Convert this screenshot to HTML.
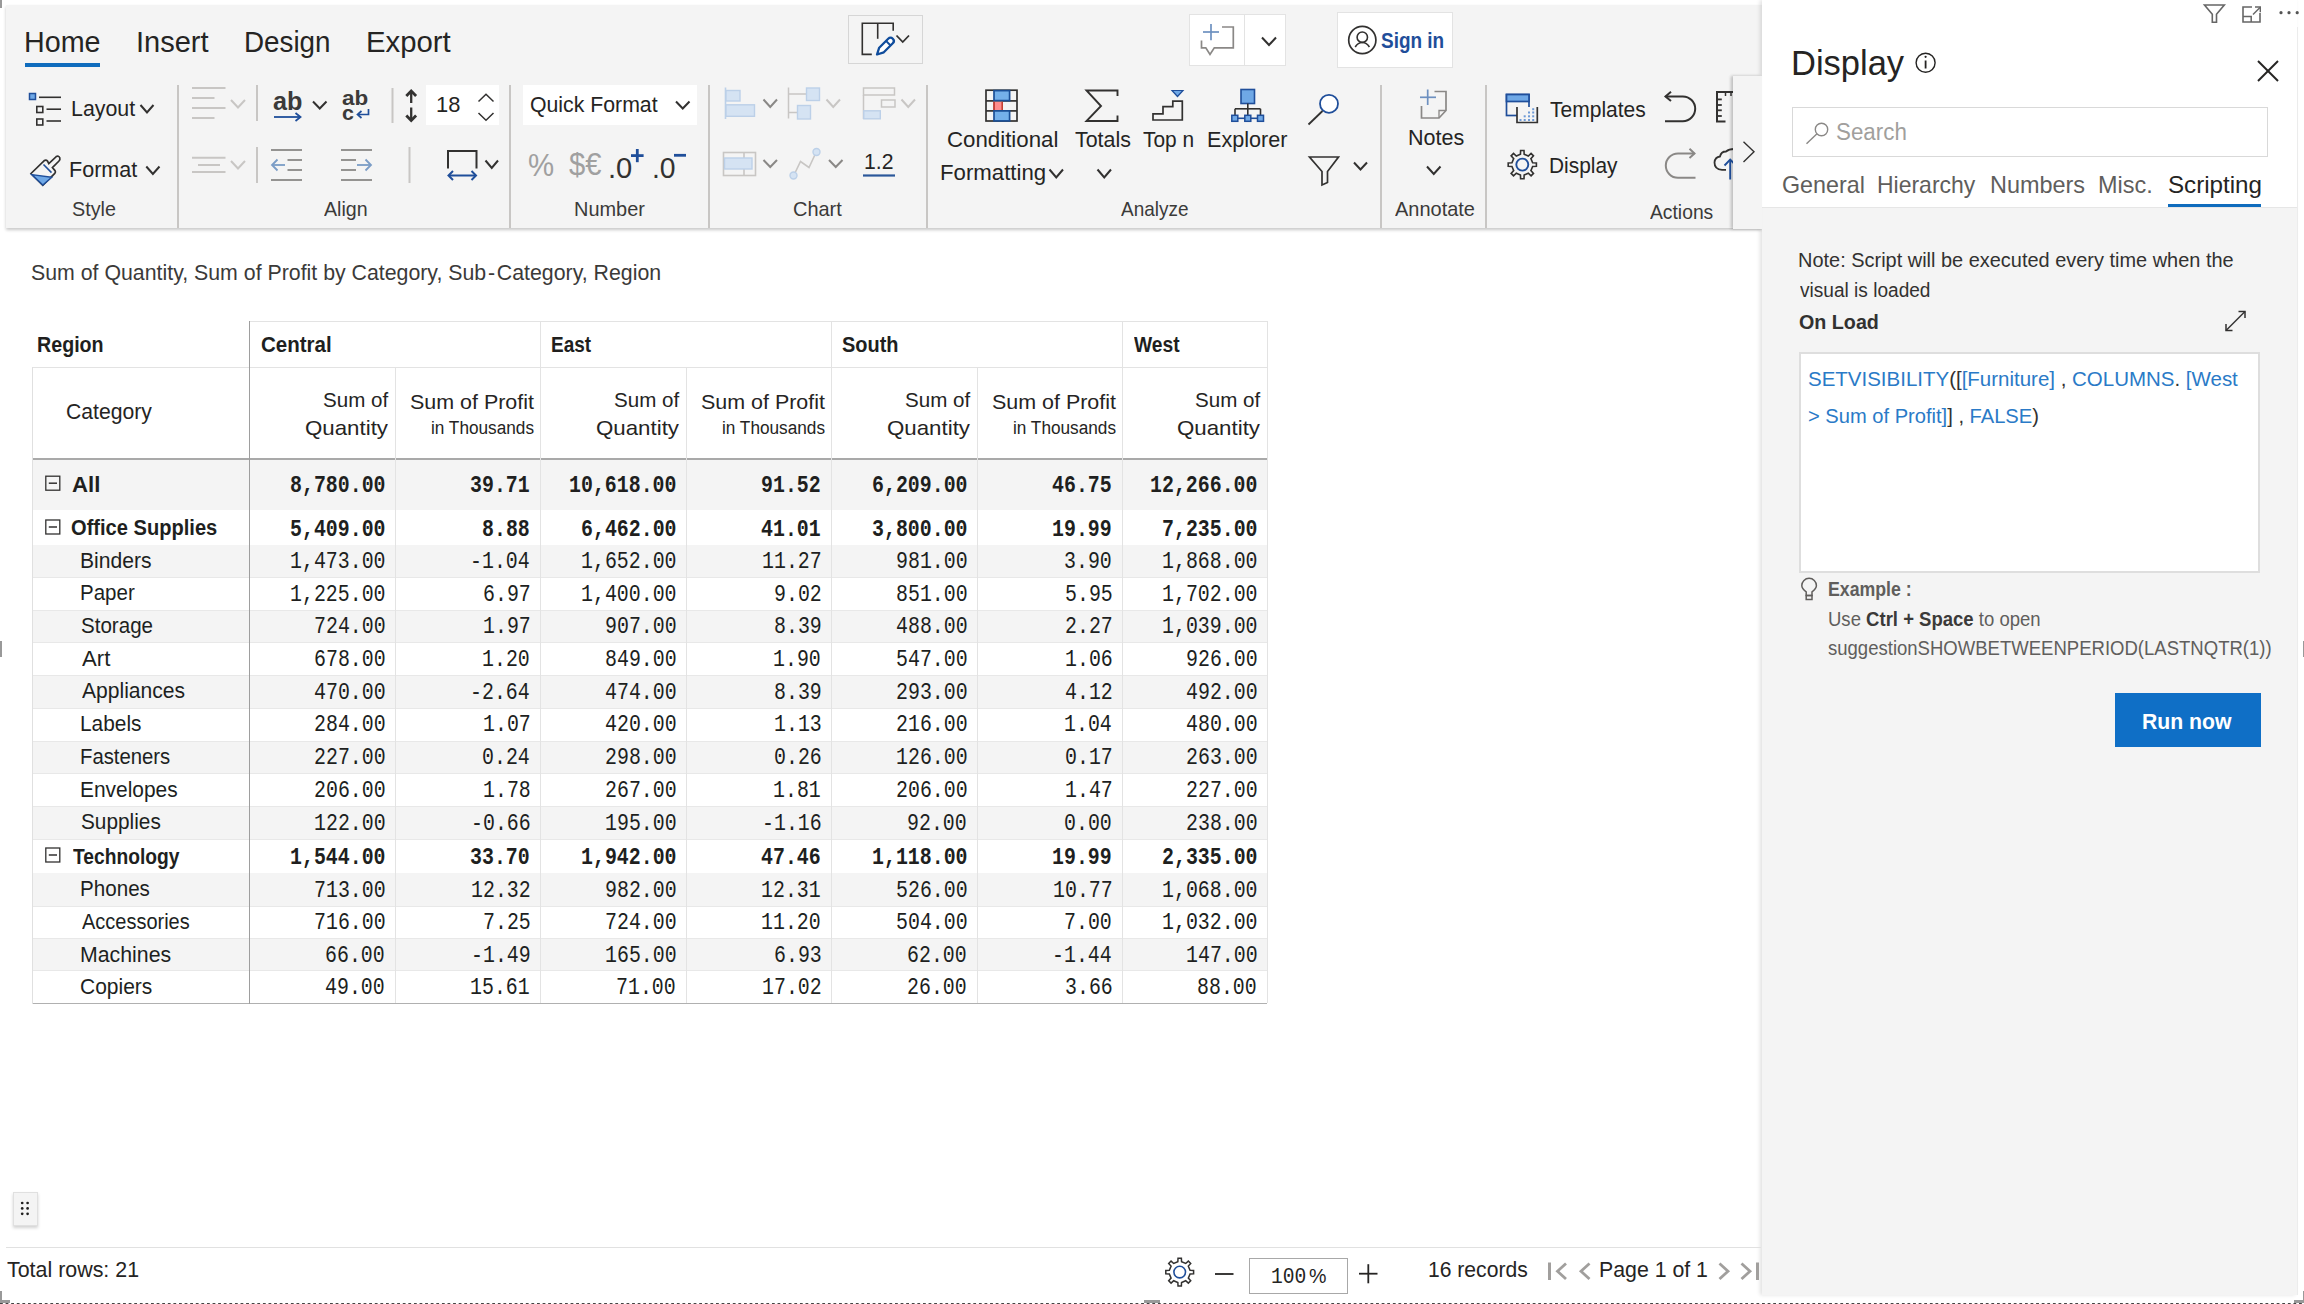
<!DOCTYPE html><html><head><meta charset="utf-8"><style>
html,body{margin:0;padding:0;width:2304px;height:1304px;overflow:hidden;background:#fff;position:relative;}
div{box-sizing:content-box}
</style></head><body>
<div style="position:absolute;left:0px;top:0px;width:2px;height:8px;background:#999;"></div><div style="position:absolute;left:0px;top:641px;width:1.5px;height:16px;background:#999;"></div><div style="position:absolute;left:2302.5px;top:641px;width:1.5px;height:16px;background:#999;"></div><div style="position:absolute;left:6px;top:5px;width:1756px;height:223px;background:#f4f4f4;box-shadow:0 2px 3px rgba(0,0,0,0.22);"></div><div style="position:absolute;left:848px;top:15px;width:75px;height:49px;background:#f4f4f4;box-sizing:border-box;border:1.5px solid #d6d6d6;"></div><div style="position:absolute;left:1189px;top:14px;width:97px;height:52px;background:#fff;box-sizing:border-box;border:1px solid #e3e3e3;"></div><div style="position:absolute;left:1244px;top:14px;width:1px;height:52px;background:#e3e3e3;"></div><div style="position:absolute;left:1337px;top:12px;width:116px;height:56px;background:#fff;box-sizing:border-box;border:1px solid #e3e3e3;"></div><div style="position:absolute;left:426px;top:85px;width:73px;height:40px;background:#fff;"></div><div style="position:absolute;left:523px;top:85px;width:174px;height:40px;background:#fff;"></div><div style="position:absolute;left:1733px;top:76px;width:29px;height:153px;background:#f4f4f4;box-shadow:-2px 0 3px rgba(0,0,0,0.12);"></div><div style="position:absolute;left:1762px;top:0px;width:535px;height:1295px;background:#fff;box-shadow:-2px 0 4px rgba(0,0,0,0.12);"></div><div style="position:absolute;left:1762px;top:207px;width:535px;height:1088px;background:#f4f4f4;border-top:1px solid #e6e6e6;box-sizing:border-box;"></div><div style="position:absolute;left:2297px;top:27px;width:1px;height:1268px;background:#ececec;"></div><div style="position:absolute;left:1792px;top:107px;width:476px;height:50px;background:#fff;box-sizing:border-box;border:1px solid #d9d9d9;"></div><div style="position:absolute;left:1799px;top:352px;width:461px;height:221px;background:#fff;box-sizing:border-box;border:2px solid #dedede;"></div><div style="position:absolute;left:2115px;top:693px;width:146px;height:54px;background:#0f6fc6;"></div><div style="position:absolute;left:32px;top:460px;width:1235px;height:50px;background:#f4f4f4;"></div><div style="position:absolute;left:32px;top:545px;width:1235px;height:32px;background:#f4f4f4;"></div><div style="position:absolute;left:32px;top:610px;width:1235px;height:32px;background:#f4f4f4;"></div><div style="position:absolute;left:32px;top:675px;width:1235px;height:33px;background:#f4f4f4;"></div><div style="position:absolute;left:32px;top:741px;width:1235px;height:32px;background:#f4f4f4;"></div><div style="position:absolute;left:32px;top:806px;width:1235px;height:33px;background:#f4f4f4;"></div><div style="position:absolute;left:32px;top:873px;width:1235px;height:33px;background:#f4f4f4;"></div><div style="position:absolute;left:32px;top:938px;width:1235px;height:32px;background:#f4f4f4;"></div><div style="position:absolute;left:32px;top:576.5px;width:1235px;height:1px;background:#e8e8e8;"></div><div style="position:absolute;left:32px;top:609.5px;width:1235px;height:1px;background:#e8e8e8;"></div><div style="position:absolute;left:32px;top:641.5px;width:1235px;height:1px;background:#e8e8e8;"></div><div style="position:absolute;left:32px;top:674.5px;width:1235px;height:1px;background:#e8e8e8;"></div><div style="position:absolute;left:32px;top:707.5px;width:1235px;height:1px;background:#e8e8e8;"></div><div style="position:absolute;left:32px;top:740.5px;width:1235px;height:1px;background:#e8e8e8;"></div><div style="position:absolute;left:32px;top:772.5px;width:1235px;height:1px;background:#e8e8e8;"></div><div style="position:absolute;left:32px;top:805.5px;width:1235px;height:1px;background:#e8e8e8;"></div><div style="position:absolute;left:32px;top:838.5px;width:1235px;height:1px;background:#e8e8e8;"></div><div style="position:absolute;left:32px;top:905.5px;width:1235px;height:1px;background:#e8e8e8;"></div><div style="position:absolute;left:32px;top:937.5px;width:1235px;height:1px;background:#e8e8e8;"></div><div style="position:absolute;left:32px;top:969.5px;width:1235px;height:1px;background:#e8e8e8;"></div><div style="position:absolute;left:32px;top:1002.5px;width:1235px;height:1px;background:#e8e8e8;"></div><div style="position:absolute;left:249px;top:321px;width:1018px;height:1px;background:#e3e3e3;"></div><div style="position:absolute;left:32px;top:367px;width:1235px;height:1px;background:#e3e3e3;"></div><div style="position:absolute;left:32px;top:458px;width:1235px;height:2px;background:#a9a9a9;"></div><div style="position:absolute;left:32px;top:1003px;width:1235px;height:1px;background:#b0b0b0;"></div><div style="position:absolute;left:32px;top:367px;width:1px;height:637px;background:#e0e0e0;"></div><div style="position:absolute;left:249px;top:321px;width:1px;height:683px;background:#9e9e9e;"></div><div style="position:absolute;left:540px;top:321px;width:1px;height:682px;background:#e3e3e3;"></div><div style="position:absolute;left:831px;top:321px;width:1px;height:682px;background:#e3e3e3;"></div><div style="position:absolute;left:1122px;top:321px;width:1px;height:682px;background:#e3e3e3;"></div><div style="position:absolute;left:1267px;top:321px;width:1px;height:682px;background:#e3e3e3;"></div><div style="position:absolute;left:395px;top:367px;width:1px;height:636px;background:#e3e3e3;"></div><div style="position:absolute;left:686px;top:367px;width:1px;height:636px;background:#e3e3e3;"></div><div style="position:absolute;left:977px;top:367px;width:1px;height:636px;background:#e3e3e3;"></div><div style="position:absolute;left:6px;top:1247px;width:1755px;height:1px;background:#e1e1e1;"></div><div style="position:absolute;left:1249px;top:1257.5px;width:99px;height:36px;background:#fff;box-sizing:border-box;border:1.5px solid #a8a8a8;"></div><div style="position:absolute;left:13px;top:1192px;width:25px;height:34px;background:#f4f4f4;box-sizing:border-box;border:1px solid #e0e0e0;box-shadow:0 2px 3px rgba(0,0,0,0.18);"></div><div style="position:absolute;left:0px;top:1303px;width:2304px;height:1px;background:transparent;background-image:linear-gradient(to right,#444 50%,transparent 50%);background-size:5.6px 1px;"></div><div style="position:absolute;left:0px;top:1291px;width:1.5px;height:12px;background:#999;"></div><div style="position:absolute;left:0px;top:1299.5px;width:9.5px;height:3.5px;background:#999;"></div><div style="position:absolute;left:2302.5px;top:1291px;width:1.5px;height:12px;background:#999;"></div><div style="position:absolute;left:2294px;top:1299.5px;width:10px;height:3.5px;background:#999;"></div><div style="position:absolute;left:1143.5px;top:1300px;width:16px;height:3px;background:#999;"></div><svg style="position:absolute;left:0;top:0" width="2304" height="1304" viewBox="0 0 2304 1304"><line x1="178" y1="85" x2="178" y2="228" stroke="#c8c6c4" stroke-width="2" /><line x1="510" y1="85" x2="510" y2="228" stroke="#c8c6c4" stroke-width="2" /><line x1="709" y1="85" x2="709" y2="228" stroke="#c8c6c4" stroke-width="2" /><line x1="927" y1="85" x2="927" y2="228" stroke="#c8c6c4" stroke-width="2" /><line x1="1381" y1="85" x2="1381" y2="228" stroke="#c8c6c4" stroke-width="2" /><line x1="1486" y1="85" x2="1486" y2="228" stroke="#c8c6c4" stroke-width="2" /><line x1="257" y1="85" x2="257" y2="121" stroke="#c8c6c4" stroke-width="2" /><line x1="257" y1="147" x2="257" y2="183" stroke="#c8c6c4" stroke-width="2" /><line x1="392.5" y1="88" x2="392.5" y2="123" stroke="#c8c6c4" stroke-width="2" /><line x1="409.5" y1="147" x2="409.5" y2="183" stroke="#c8c6c4" stroke-width="2" /><rect x="29.5" y="93.5" width="6" height="6" stroke="#1f4e9a" stroke-width="1.5" fill="#6fa8e6" /><line x1="39" y1="97.3" x2="61" y2="97.3" stroke="#323130" stroke-width="1.6" /><rect x="36.8" y="106.5" width="6" height="6" stroke="#323130" stroke-width="1.6" fill="none" /><line x1="46.5" y1="109.2" x2="61" y2="109.2" stroke="#323130" stroke-width="1.6" /><rect x="36.8" y="119" width="6" height="6" stroke="#323130" stroke-width="1.6" fill="none" /><line x1="46.5" y1="121" x2="61" y2="121" stroke="#323130" stroke-width="1.6" /><path d="M140.5 105 L147.0 112.5 L153.5 105" stroke="#323130" stroke-width="2" fill="none" stroke-linecap="butt" stroke-linejoin="miter"/><path d="M31 173.5 L44 160.8 Q46 159.3 47.5 161 L48.8 163.6 L56.2 156.6 Q58.6 155.3 59.8 157.8 Q60.3 159.8 59 161 L52.4 167.6 L55 170.6 Q56 172 54.8 173.4 L42.8 185.3 Z" stroke="#323130" stroke-width="1.7" fill="none" /><path d="M31.8 174.6 L51.8 177.2 L42.8 185 Z" stroke="#1f4e9a" stroke-width="1.4" fill="#6fa8e6" /><line x1="43.5" y1="164.5" x2="51.5" y2="172.6" stroke="#1f4e9a" stroke-width="1.6" /><path d="M146.3 166.5 L152.9 174 L159.5 166.5" stroke="#323130" stroke-width="2" fill="none" stroke-linecap="butt" stroke-linejoin="miter"/><line x1="192" y1="88" x2="225.5" y2="88" stroke="#c8c6c4" stroke-width="2" /><line x1="192" y1="98" x2="214.5" y2="98" stroke="#c8c6c4" stroke-width="2" /><line x1="192" y1="108" x2="225.5" y2="108" stroke="#c8c6c4" stroke-width="2" /><line x1="192" y1="118" x2="214.5" y2="118" stroke="#c8c6c4" stroke-width="2" /><path d="M231 100 L238.0 107.5 L245 100" stroke="#c8c6c4" stroke-width="2" fill="none" stroke-linecap="butt" stroke-linejoin="miter"/><line x1="192" y1="157.8" x2="225.5" y2="157.8" stroke="#c8c6c4" stroke-width="2" /><line x1="198" y1="165" x2="220" y2="165" stroke="#c8c6c4" stroke-width="2" /><line x1="192" y1="172" x2="225.5" y2="172" stroke="#c8c6c4" stroke-width="2" /><path d="M231 161 L238.0 168.5 L245 161" stroke="#c8c6c4" stroke-width="2" fill="none" stroke-linecap="butt" stroke-linejoin="miter"/><line x1="274" y1="117" x2="300" y2="117" stroke="#1f4e9a" stroke-width="1.8" /><path d="M295.5 113 L300.5 117 L295.5 121" stroke="#1f4e9a" stroke-width="1.8" fill="none" /><path d="M313 101.5 L319.75 108.5 L326.5 101.5" stroke="#323130" stroke-width="2" fill="none" stroke-linecap="butt" stroke-linejoin="miter"/><path d="M368.5 109 L368.5 114.5 L358 114.5" stroke="#1f4e9a" stroke-width="1.7" fill="none" /><path d="M361.5 111 L357.5 114.5 L361.5 118" stroke="#1f4e9a" stroke-width="1.7" fill="none" /><line x1="411.2" y1="92" x2="411.2" y2="103" stroke="#323130" stroke-width="2.3" /><path d="M406.3 96 L411.2 91 L416.1 96" stroke="#323130" stroke-width="2.8" fill="none" stroke-linejoin="miter"/><line x1="411.2" y1="107.5" x2="411.2" y2="119" stroke="#323130" stroke-width="2.3" /><path d="M406.3 115.5 L411.2 120.5 L416.1 115.5" stroke="#323130" stroke-width="2.8" fill="none" stroke-linejoin="miter"/><path d="M478.5 101.5 L486 94.3 L493.5 101.5" stroke="#323130" stroke-width="1.5" fill="none" /><path d="M478.5 113 L486 120.3 L493.5 113" stroke="#323130" stroke-width="1.5" fill="none" /><line x1="271" y1="150" x2="302" y2="150" stroke="#8a8886" stroke-width="1.8" /><line x1="287.5" y1="160" x2="302" y2="160" stroke="#8a8886" stroke-width="1.8" /><line x1="287.5" y1="170" x2="302" y2="170" stroke="#8a8886" stroke-width="1.8" /><line x1="271" y1="180" x2="302" y2="180" stroke="#8a8886" stroke-width="1.8" /><line x1="272" y1="165" x2="285" y2="165" stroke="#7a9cc6" stroke-width="1.8" /><path d="M277.5 159.5 L272 165 L277.5 170.5" stroke="#7a9cc6" stroke-width="1.8" fill="none" /><line x1="341" y1="150" x2="372" y2="150" stroke="#8a8886" stroke-width="1.8" /><line x1="341" y1="160" x2="356" y2="160" stroke="#8a8886" stroke-width="1.8" /><line x1="341" y1="170" x2="356" y2="170" stroke="#8a8886" stroke-width="1.8" /><line x1="341" y1="180" x2="372" y2="180" stroke="#8a8886" stroke-width="1.8" /><line x1="357" y1="165" x2="371" y2="165" stroke="#7a9cc6" stroke-width="1.8" /><path d="M365.5 159.5 L371 165 L365.5 170.5" stroke="#7a9cc6" stroke-width="1.8" fill="none" /><path d="M448 168.5 L448 151 L476.5 151 L476.5 168.5" stroke="#323130" stroke-width="2" fill="none" /><line x1="449" y1="175.5" x2="476" y2="175.5" stroke="#1f4e9a" stroke-width="2" /><path d="M453 171 L448.5 175.5 L453 180" stroke="#1f4e9a" stroke-width="2" fill="none" /><path d="M471.5 171 L476 175.5 L471.5 180" stroke="#1f4e9a" stroke-width="2" fill="none" /><path d="M485.5 160.5 L491.75 168 L498 160.5" stroke="#323130" stroke-width="2" fill="none" stroke-linecap="butt" stroke-linejoin="miter"/><path d="M676 101.5 L682.75 108.5 L689.5 101.5" stroke="#323130" stroke-width="2" fill="none" stroke-linecap="butt" stroke-linejoin="miter"/><line x1="637.3" y1="149" x2="637.3" y2="162.2" stroke="#1f4e9a" stroke-width="2.8" /><line x1="631" y1="155.6" x2="643.6" y2="155.6" stroke="#1f4e9a" stroke-width="2.8" /><line x1="674" y1="155.3" x2="686" y2="155.3" stroke="#1f4e9a" stroke-width="2.8" /><line x1="725.5" y1="87.5" x2="725.5" y2="119" stroke="#bcd0e8" stroke-width="1.6" /><rect x="726" y="90.5" width="14" height="10.5" stroke="#bcd0e8" stroke-width="1.4" fill="#d5e3f3" /><rect x="726" y="104.8" width="28.5" height="11.5" stroke="#bcd0e8" stroke-width="1.4" fill="#d5e3f3" /><path d="M763.5 99.5 L770.25 107 L777 99.5" stroke="#8a8886" stroke-width="2" fill="none" stroke-linecap="butt" stroke-linejoin="miter"/><line x1="788.5" y1="87.5" x2="788.5" y2="118.5" stroke="#c8c6c4" stroke-width="1.5" /><line x1="788.5" y1="94" x2="806" y2="94" stroke="#c8c6c4" stroke-width="1.5" /><line x1="788.5" y1="112.5" x2="797" y2="112.5" stroke="#c8c6c4" stroke-width="1.5" /><rect x="806.5" y="88" width="13" height="12.5" stroke="#bcd0e8" stroke-width="1.4" fill="#d5e3f3" /><rect x="797.5" y="105.5" width="13" height="13.5" stroke="#bcd0e8" stroke-width="1.4" fill="#d5e3f3" /><path d="M826.5 99.5 L833.25 107 L840 99.5" stroke="#c8c6c4" stroke-width="2" fill="none" stroke-linecap="butt" stroke-linejoin="miter"/><rect x="863.5" y="88" width="31" height="7" stroke="#c8c6c4" stroke-width="1.5" fill="none" /><rect x="881.5" y="100" width="13.5" height="7" stroke="#c8c6c4" stroke-width="1.5" fill="none" /><line x1="863.5" y1="95" x2="863.5" y2="119" stroke="#c8c6c4" stroke-width="1.5" /><rect x="863.8" y="110.8" width="16.5" height="8" stroke="#bcd0e8" stroke-width="1.4" fill="#d5e3f3" /><path d="M901.5 99.5 L908.25 107 L915 99.5" stroke="#c8c6c4" stroke-width="2" fill="none" stroke-linecap="butt" stroke-linejoin="miter"/><rect x="723.5" y="152.5" width="32" height="23" stroke="#c8c6c4" stroke-width="1.6" fill="none" /><line x1="744" y1="152.5" x2="744" y2="175.5" stroke="#c8c6c4" stroke-width="1.6" /><rect x="724.5" y="158" width="27.5" height="11" stroke="#bcd0e8" stroke-width="1.4" fill="#d5e3f3" /><path d="M763.5 160 L770.25 167 L777 160" stroke="#8a8886" stroke-width="2" fill="none" stroke-linecap="butt" stroke-linejoin="miter"/><path d="M794 175 L800.5 161.5 L809 167.5 L816 152.5" stroke="#c8c6c4" stroke-width="1.6" fill="none" /><circle cx="793.5" cy="175.5" r="3.5" stroke="#bcd0e8" stroke-width="1.4" fill="#d5e3f3"/><circle cx="816.5" cy="152" r="3.5" stroke="#bcd0e8" stroke-width="1.4" fill="#d5e3f3"/><path d="M829 160 L835.75 167 L842.5 160" stroke="#8a8886" stroke-width="2" fill="none" stroke-linecap="butt" stroke-linejoin="miter"/><line x1="863" y1="175.5" x2="895" y2="175.5" stroke="#2b579a" stroke-width="2.2" /><rect x="986" y="90.2" width="31" height="30.8" stroke="#323130" stroke-width="1.7" fill="none" /><line x1="986" y1="100.9" x2="1017" y2="100.9" stroke="#323130" stroke-width="1.7" /><line x1="986" y1="110.9" x2="1017" y2="110.9" stroke="#323130" stroke-width="1.7" /><rect x="994" y="90.6" width="15.6" height="10" fill="#74b0ea" stroke="#1a4f97" stroke-width="1.7"/><rect x="994" y="110.9" width="15.6" height="10" fill="#74b0ea" stroke="#1a4f97" stroke-width="1.7"/><rect x="993.5" y="101.8" width="9" height="8.2" fill="#ff8c8c"/><line x1="994" y1="101.8" x2="994" y2="110" stroke="#b0281e" stroke-width="1.5" /><line x1="1002.2" y1="101.8" x2="1002.2" y2="110" stroke="#c0392b" stroke-width="1.5" /><path d="M1049.5 169.5 L1056.25 177.5 L1063 169.5" stroke="#323130" stroke-width="2" fill="none" stroke-linecap="butt" stroke-linejoin="miter"/><path d="M1117.5 96 L1117.5 90.5 L1086.5 90.5 L1101 106 L1086.5 121 L1117.5 121 L1117.5 115.5" stroke="#323130" stroke-width="1.9" fill="none" /><path d="M1097.5 169.5 L1104.25 177.5 L1111 169.5" stroke="#323130" stroke-width="2" fill="none" stroke-linecap="butt" stroke-linejoin="miter"/><path d="M1153 120 L1153 113.8 L1163 113.8 L1163 106.6 L1172.8 106.6 L1172.8 101.2 L1182.3 101.2 L1182.3 120 Z" stroke="#323130" stroke-width="1.7" fill="none" /><path d="M1172 90.5 L1183 90.5 L1177.5 96.5 Z" stroke="#1f4e9a" stroke-width="1.2" fill="#6fa8e6" /><rect x="1241" y="89.5" width="13.5" height="14" stroke="#1f4e9a" stroke-width="1.6" fill="#6fa8e6" /><line x1="1247.8" y1="103.5" x2="1247.8" y2="118" stroke="#323130" stroke-width="1.6" /><line x1="1235" y1="108.8" x2="1260.5" y2="108.8" stroke="#323130" stroke-width="1.6" /><line x1="1235" y1="108.8" x2="1235" y2="115" stroke="#323130" stroke-width="1.6" /><line x1="1260.5" y1="108.8" x2="1260.5" y2="115" stroke="#323130" stroke-width="1.6" /><line x1="1235" y1="118.3" x2="1260.5" y2="118.3" stroke="#1f4e9a" stroke-width="1.6" /><rect x="1231.8" y="115.3" width="6" height="6" stroke="#1f4e9a" stroke-width="1.5" fill="#6fa8e6" /><rect x="1244.8" y="115.3" width="6" height="6" stroke="#1f4e9a" stroke-width="1.5" fill="#6fa8e6" /><rect x="1257.5" y="115.3" width="6" height="6" stroke="#1f4e9a" stroke-width="1.5" fill="#6fa8e6" /><circle cx="1329" cy="103.8" r="9" stroke="#1f4e9a" stroke-width="1.8" fill="#fff"/><line x1="1308.5" y1="124.5" x2="1322.5" y2="111" stroke="#323130" stroke-width="1.8" /><path d="M1309.5 157 L1338.5 157 L1327.5 171.5 L1327.5 182.5 L1322 185 L1322 171.5 Z" stroke="#323130" stroke-width="1.7" fill="none" /><path d="M1354 162.5 L1360.5 169.5 L1367 162.5" stroke="#323130" stroke-width="2" fill="none" stroke-linecap="butt" stroke-linejoin="miter"/><line x1="1427.7" y1="89.5" x2="1427.7" y2="105" stroke="#6d90c0" stroke-width="1.7" /><line x1="1420" y1="97.3" x2="1436" y2="97.3" stroke="#6d90c0" stroke-width="1.7" /><path d="M1434.5 91.5 L1446 91.5 L1446 110.5 L1439 118 L1421.5 118 L1421.5 106" stroke="#8a8886" stroke-width="1.7" fill="none" /><path d="M1446 110.5 L1439 110.5 L1439 118" stroke="#8a8886" stroke-width="1.3" fill="none" /><path d="M1427 166.5 L1433.75 174 L1440.5 166.5" stroke="#323130" stroke-width="2" fill="none" stroke-linecap="butt" stroke-linejoin="miter"/><rect x="1506.5" y="94.5" width="22.5" height="21" stroke="#1f4e9a" stroke-width="1.7" fill="none" /><rect x="1506.5" y="94.5" width="22.5" height="7" fill="#6fa8e6" stroke="#1f4e9a" stroke-width="1.7"/><rect x="1517" y="107" width="20.5" height="15.5" fill="#f4f4f4"/><path d="M1517 107 L1517 122.5 L1537.3 122.5 L1537.3 107" stroke="#323130" stroke-width="1.7" fill="none" /><rect x="1532.2" y="108.2" width="2" height="2" fill="#6d9ad6"/><rect x="1528" y="111.5" width="2" height="2" fill="#6d9ad6"/><rect x="1532.2" y="111.5" width="2" height="2" fill="#6d9ad6"/><rect x="1523.7" y="115.3" width="2" height="2" fill="#6d9ad6"/><rect x="1528" y="115.3" width="2" height="2" fill="#6d9ad6"/><rect x="1532.2" y="115.3" width="2" height="2" fill="#6d9ad6"/><rect x="1519.5" y="119" width="2" height="2" fill="#6d9ad6"/><rect x="1523.7" y="119" width="2" height="2" fill="#6d9ad6"/><rect x="1528" y="119" width="2" height="2" fill="#6d9ad6"/><rect x="1532.2" y="119" width="2" height="2" fill="#6d9ad6"/><path d="M1532.64 162.75 L1536.40 162.90 L1536.40 166.30 L1532.64 166.45 L1530.91 170.60 L1533.47 173.36 L1531.06 175.77 L1528.30 173.21 L1524.15 174.94 L1524.00 178.70 L1520.60 178.70 L1520.45 174.94 L1516.30 173.21 L1513.54 175.77 L1511.13 173.36 L1513.69 170.60 L1511.96 166.45 L1508.20 166.30 L1508.20 162.90 L1511.96 162.75 L1513.69 158.60 L1511.13 155.84 L1513.54 153.43 L1516.30 155.99 L1520.45 154.26 L1520.60 150.50 L1524.00 150.50 L1524.15 154.26 L1528.30 155.99 L1531.06 153.43 L1533.47 155.84 L1530.91 158.60 Z" stroke="#323130" stroke-width="1.6" fill="none" /><circle cx="1522.3" cy="164.6" r="6" stroke="#1f4e9a" stroke-width="1.9" fill="none"/><path d="M1665.5 96.4 L1682.8 96.4 A12.4 12.4 0 0 1 1682.8 121.2 L1665 121.2" stroke="#323130" stroke-width="2" fill="none" /><path d="M1671 91.8 L1665.5 96.4 L1671 101" stroke="#323130" stroke-width="2" fill="none" /><path d="M1694.5 153.4 L1678 153.4 A12.2 12.2 0 0 0 1678 177.8 L1695.5 177.8" stroke="#8a8886" stroke-width="2" fill="none" /><path d="M1689.5 148.8 L1694.5 153.4 L1689.5 158" stroke="#8a8886" stroke-width="2" fill="none" /><path d="M1735 92 L1717 92 L1717 121.5 L1725.5 121.5" stroke="#323130" stroke-width="2" fill="none" /><line x1="1717" y1="99.4" x2="1721.8" y2="99.4" stroke="#323130" stroke-width="1.8" /><line x1="1717" y1="105" x2="1721.8" y2="105" stroke="#323130" stroke-width="1.8" /><line x1="1717" y1="110.3" x2="1721.8" y2="110.3" stroke="#323130" stroke-width="1.8" /><line x1="1717" y1="116" x2="1721.8" y2="116" stroke="#323130" stroke-width="1.8" /><line x1="1725.5" y1="92" x2="1725.5" y2="96" stroke="#323130" stroke-width="1.5" /><line x1="1731" y1="92" x2="1731" y2="96" stroke="#323130" stroke-width="1.5" /><path d="M1726 169.8 L1722 169.8 Q1714.5 169.5 1714.5 162.5 Q1715 157 1720 156.5 Q1721 151.5 1726 151.5 Q1729 149 1734 149" stroke="#323130" stroke-width="1.8" fill="none" /><line x1="1730.2" y1="179.5" x2="1730.2" y2="160" stroke="#1f4e9a" stroke-width="1.9" /><path d="M1724.5 165.5 L1730.2 159.6 L1736 165.5" stroke="#1f4e9a" stroke-width="1.9" fill="none" /><path d="M871.8 54.4 L862.3 54.4 L862.3 23.3 L893.2 23.3 L893.2 30.7" stroke="#323130" stroke-width="1.6" fill="none" /><line x1="877.7" y1="23.3" x2="877.7" y2="38.8" stroke="#323130" stroke-width="1.6" /><path d="M877 54.5 L879.2 47.7 L888.2 38.7 Q890.5 36.4 892.8 38.7 Q895.1 41 892.8 43.3 L883.8 52.3 Z" stroke="#0f4c9c" stroke-width="2.3" fill="#fff" stroke-linejoin="round"/><line x1="886" y1="40.9" x2="890.6" y2="45.5" stroke="#0f4c9c" stroke-width="2.0" /><path d="M896.5 35.5 L902.75 42 L909 35.5" stroke="#323130" stroke-width="1.8" fill="none" stroke-linecap="butt" stroke-linejoin="miter"/><line x1="1211" y1="24" x2="1211" y2="40.2" stroke="#6d90c0" stroke-width="1.7" /><line x1="1203" y1="32" x2="1219" y2="32" stroke="#6d90c0" stroke-width="1.7" /><path d="M1222 27 L1233.3 27 L1233.3 47.8 L1214.3 47.8 L1210 54.5 L1205.8 47.8 L1201.5 47.8 L1201.5 40.5" stroke="#8a8886" stroke-width="1.7" fill="none" /><path d="M1262 37.5 L1269.0 45 L1276 37.5" stroke="#323130" stroke-width="2" fill="none" stroke-linecap="butt" stroke-linejoin="miter"/><circle cx="1362.3" cy="40" r="13.6" stroke="#323130" stroke-width="1.7" fill="none"/><circle cx="1362.3" cy="37.2" r="5.2" stroke="#323130" stroke-width="1.6" fill="none"/><path d="M1355.2 47 Q1358 42.5 1362.3 42.5 Q1366.6 42.5 1369.4 47" stroke="#323130" stroke-width="1.6" fill="none" /><path d="M1743.5 141.8 L1754 151.8 L1743.5 162" stroke="#323130" stroke-width="1.4" fill="none" /><path d="M2204.5 5 L2224.3 5 L2216.5 14.2 L2216.5 22.3 L2212.3 22.3 L2212.3 14.2 Z" stroke="#666" stroke-width="1.6" fill="none" /><path d="M2252 7 L2243 7 L2243 22 L2260 22 L2260 13" stroke="#666" stroke-width="1.6" fill="none" /><path d="M2243 16.5 L2251.2 16.5 L2251.2 22" stroke="#666" stroke-width="1.5" fill="none" /><line x1="2253" y1="14.5" x2="2260" y2="7.5" stroke="#666" stroke-width="1.4" /><path d="M2255 7 L2260.3 7 L2260.3 12.3" stroke="#666" stroke-width="1.4" fill="none" /><circle cx="2281" cy="12.7" r="1.6" fill="#555"/><circle cx="2289" cy="12.7" r="1.6" fill="#555"/><circle cx="2297.2" cy="12.7" r="1.6" fill="#555"/><line x1="2258" y1="61" x2="2278" y2="81" stroke="#252423" stroke-width="1.9" /><line x1="2278" y1="61" x2="2258" y2="81" stroke="#252423" stroke-width="1.9" /><circle cx="1925.6" cy="62.8" r="9.5" stroke="#252423" stroke-width="1.4" fill="none"/><line x1="1925.6" y1="60.5" x2="1925.6" y2="68.5" stroke="#252423" stroke-width="1.8" /><circle cx="1925.6" cy="56.8" r="1.1" fill="#252423"/><circle cx="1821.5" cy="129.5" r="6.2" stroke="#8a8886" stroke-width="1.4" fill="none"/><line x1="1806.5" y1="143.8" x2="1817" y2="133.8" stroke="#8a8886" stroke-width="1.4" /><line x1="2226" y1="330.5" x2="2245" y2="311.5" stroke="#323130" stroke-width="1.5" /><path d="M2238.5 311.5 L2245 311.5 L2245 318" stroke="#323130" stroke-width="1.5" fill="none" /><path d="M2226 324 L2226 330.5 L2232.5 330.5" stroke="#323130" stroke-width="1.5" fill="none" /><path d="M1806.2 595.5 L1806.2 591.8 Q1801.8 588.8 1801.8 585.6 A7.3 7.3 0 1 1 1816.4 585.6 Q1816.4 588.8 1812 591.8 L1812 595.5 Z" stroke="#605e5c" stroke-width="1.5" fill="none" /><rect x="1806.2" y="595.5" width="5.8" height="4" stroke="#605e5c" stroke-width="1.5" fill="none" /><rect x="45.8" y="476.2" width="14" height="14" stroke="#323130" stroke-width="1.3" fill="none" /><line x1="48.8" y1="483.2" x2="57" y2="483.2" stroke="#323130" stroke-width="1.5" /><rect x="45.8" y="520" width="14" height="14" stroke="#323130" stroke-width="1.3" fill="none" /><line x1="48.8" y1="527" x2="57" y2="527" stroke="#323130" stroke-width="1.5" /><rect x="45.8" y="848" width="14" height="14" stroke="#323130" stroke-width="1.3" fill="none" /><line x1="48.8" y1="855" x2="57" y2="855" stroke="#323130" stroke-width="1.5" /><path d="M1190.04 1270.25 L1193.60 1270.42 L1193.60 1273.78 L1190.04 1273.95 L1188.31 1278.10 L1190.71 1280.74 L1188.34 1283.11 L1185.70 1280.71 L1181.55 1282.44 L1181.38 1286.00 L1178.02 1286.00 L1177.85 1282.44 L1173.70 1280.71 L1171.06 1283.11 L1168.69 1280.74 L1171.09 1278.10 L1169.36 1273.95 L1165.80 1273.78 L1165.80 1270.42 L1169.36 1270.25 L1171.09 1266.10 L1168.69 1263.46 L1171.06 1261.09 L1173.70 1263.49 L1177.85 1261.76 L1178.02 1258.20 L1181.38 1258.20 L1181.55 1261.76 L1185.70 1263.49 L1188.34 1261.09 L1190.71 1263.46 L1188.31 1266.10 Z" stroke="#323130" stroke-width="1.5" fill="none" /><circle cx="1179.7" cy="1272.1" r="5.8" stroke="#1f4e9a" stroke-width="1.6" fill="none"/><line x1="1215" y1="1274" x2="1233.5" y2="1274" stroke="#252423" stroke-width="1.8" /><line x1="1359" y1="1273.7" x2="1377.5" y2="1273.7" stroke="#252423" stroke-width="1.8" /><line x1="1368.3" y1="1264.2" x2="1368.3" y2="1283.3" stroke="#252423" stroke-width="1.8" /><line x1="1549.5" y1="1262.5" x2="1549.5" y2="1280" stroke="#a19f9d" stroke-width="3" /><path d="M1566 1263.5 L1557.5 1271.2 L1566 1279" stroke="#a19f9d" stroke-width="2.8" fill="none" /><path d="M1589.5 1263.5 L1581 1271.2 L1589.5 1279" stroke="#a19f9d" stroke-width="2.8" fill="none" /><path d="M1719.5 1263.5 L1728 1271.2 L1719.5 1279" stroke="#a19f9d" stroke-width="2.8" fill="none" /><path d="M1741.5 1263.5 L1750 1271.2 L1741.5 1279" stroke="#a19f9d" stroke-width="2.8" fill="none" /><line x1="1757.5" y1="1262.5" x2="1757.5" y2="1280" stroke="#a19f9d" stroke-width="3" /><circle cx="22.2" cy="1203" r="1.35" fill="#201f1e"/><circle cx="27.6" cy="1203" r="1.35" fill="#201f1e"/><circle cx="22.2" cy="1208.4" r="1.35" fill="#201f1e"/><circle cx="27.6" cy="1208.4" r="1.35" fill="#201f1e"/><circle cx="22.2" cy="1213.8" r="1.35" fill="#201f1e"/><circle cx="27.6" cy="1213.8" r="1.35" fill="#201f1e"/></svg><div style="position:absolute;left:1733px;top:76px;width:29px;height:153px;background:#f4f4f4;box-shadow:-2px 0 3px rgba(0,0,0,0.12);"></div><svg style="position:absolute;left:1733px;top:76px" width="29" height="153" viewBox="1733 76 29 153"><path d="M1743.5 141.8 L1754 151.8 L1743.5 162" stroke="#323130" stroke-width="1.4" fill="none"/></svg><div style="position:absolute;left:24.00px;top:27.40px;font-family:'Liberation Sans', sans-serif;font-size:30px;font-weight:400;line-height:30px;color:#252423;white-space:nowrap;transform:scale(0.9567,1.0000);transform-origin:0 25.40px;">Home</div><div style="position:absolute;left:135.69px;top:27.40px;font-family:'Liberation Sans', sans-serif;font-size:30px;font-weight:400;line-height:30px;color:#252423;white-space:nowrap;transform:scale(0.9674,1.0000);transform-origin:0 25.40px;">Insert</div><div style="position:absolute;left:243.98px;top:27.40px;font-family:'Liberation Sans', sans-serif;font-size:30px;font-weight:400;line-height:30px;color:#252423;white-space:nowrap;transform:scale(0.9264,1.0000);transform-origin:0 25.40px;">Design</div><div style="position:absolute;left:365.66px;top:27.40px;font-family:'Liberation Sans', sans-serif;font-size:30px;font-weight:400;line-height:30px;color:#252423;white-space:nowrap;transform:scale(0.9762,1.0000);transform-origin:0 25.40px;">Export</div><div style="position:absolute;left:25px;top:63px;width:75px;height:4px;background:#0f6cbd;"></div><div style="position:absolute;left:70.99px;top:97.97px;font-family:'Liberation Sans', sans-serif;font-size:22px;font-weight:400;line-height:22px;color:#252423;white-space:nowrap;transform:scale(0.9715,1.0000);transform-origin:0 18.63px;">Layout</div><div style="position:absolute;left:69.48px;top:159.37px;font-family:'Liberation Sans', sans-serif;font-size:22px;font-weight:400;line-height:22px;color:#252423;white-space:nowrap;transform:scale(0.9799,1.0000);transform-origin:0 18.63px;">Format</div><div style="position:absolute;left:72.31px;top:198.02px;font-family:'Liberation Sans', sans-serif;font-size:21px;font-weight:400;line-height:21px;color:#3b3a39;white-space:nowrap;transform:scale(0.9412,1.0000);transform-origin:0 17.78px;">Style</div><div style="position:absolute;left:323.60px;top:197.62px;font-family:'Liberation Sans', sans-serif;font-size:21px;font-weight:400;line-height:21px;color:#3b3a39;white-space:nowrap;transform:scale(0.9347,1.0000);transform-origin:0 17.78px;">Align</div><div style="position:absolute;left:436.36px;top:94.17px;font-family:'Liberation Sans', sans-serif;font-size:22px;font-weight:400;line-height:22px;color:#252423;white-space:nowrap;transform:scale(0.9959,1.0000);transform-origin:0 18.63px;">18</div><div style="position:absolute;left:529.94px;top:94.17px;font-family:'Liberation Sans', sans-serif;font-size:22px;font-weight:400;line-height:22px;color:#252423;white-space:nowrap;transform:scale(0.9664,1.0000);transform-origin:0 18.63px;">Quick Format</div><div style="position:absolute;left:574.10px;top:197.92px;font-family:'Liberation Sans', sans-serif;font-size:21px;font-weight:400;line-height:21px;color:#3b3a39;white-space:nowrap;transform:scale(0.9496,1.0000);transform-origin:0 17.78px;">Number</div><div style="position:absolute;left:793.20px;top:197.72px;font-family:'Liberation Sans', sans-serif;font-size:21px;font-weight:400;line-height:21px;color:#3b3a39;white-space:nowrap;transform:scale(0.9504,1.0000);transform-origin:0 17.78px;">Chart</div><div style="position:absolute;left:863.91px;top:150.57px;font-family:'Liberation Sans', sans-serif;font-size:22px;font-weight:400;line-height:22px;color:#252423;white-space:nowrap;transform:scale(0.9630,1.0000);transform-origin:0 18.63px;">1.2</div><div style="position:absolute;left:947.09px;top:129.70px;font-family:'Liberation Sans', sans-serif;font-size:21.5px;font-weight:400;line-height:21.5px;color:#252423;white-space:nowrap;transform:scale(1.0350,1.0000);transform-origin:0 18.20px;">Conditional</div><div style="position:absolute;left:940.12px;top:162.50px;font-family:'Liberation Sans', sans-serif;font-size:21.5px;font-weight:400;line-height:21.5px;color:#252423;white-space:nowrap;transform:scale(1.0326,1.0000);transform-origin:0 18.20px;">Formatting</div><div style="position:absolute;left:1074.87px;top:129.70px;font-family:'Liberation Sans', sans-serif;font-size:21.5px;font-weight:400;line-height:21.5px;color:#252423;white-space:nowrap;transform:scale(0.9958,1.0000);transform-origin:0 18.20px;">Totals</div><div style="position:absolute;left:1142.68px;top:129.80px;font-family:'Liberation Sans', sans-serif;font-size:21.5px;font-weight:400;line-height:21.5px;color:#252423;white-space:nowrap;transform:scale(0.9716,1.0000);transform-origin:0 18.20px;">Top n</div><div style="position:absolute;left:1207.47px;top:129.80px;font-family:'Liberation Sans', sans-serif;font-size:21.5px;font-weight:400;line-height:21.5px;color:#252423;white-space:nowrap;transform:scale(1.0047,1.0000);transform-origin:0 18.20px;">Explorer</div><div style="position:absolute;left:1121.40px;top:197.72px;font-family:'Liberation Sans', sans-serif;font-size:21px;font-weight:400;line-height:21px;color:#3b3a39;white-space:nowrap;transform:scale(0.9035,1.0000);transform-origin:0 17.78px;">Analyze</div><div style="position:absolute;left:1407.58px;top:126.97px;font-family:'Liberation Sans', sans-serif;font-size:22px;font-weight:400;line-height:22px;color:#252423;white-space:nowrap;transform:scale(0.9783,1.0000);transform-origin:0 18.63px;">Notes</div><div style="position:absolute;left:1394.70px;top:197.72px;font-family:'Liberation Sans', sans-serif;font-size:21px;font-weight:400;line-height:21px;color:#3b3a39;white-space:nowrap;transform:scale(0.9512,1.0000);transform-origin:0 17.78px;">Annotate</div><div style="position:absolute;left:1549.88px;top:99.17px;font-family:'Liberation Sans', sans-serif;font-size:22px;font-weight:400;line-height:22px;color:#252423;white-space:nowrap;transform:scale(0.9555,1.0000);transform-origin:0 18.63px;">Templates</div><div style="position:absolute;left:1548.63px;top:155.37px;font-family:'Liberation Sans', sans-serif;font-size:22px;font-weight:400;line-height:22px;color:#252423;white-space:nowrap;transform:scale(0.9489,1.0000);transform-origin:0 18.63px;">Display</div><div style="position:absolute;left:1650.20px;top:201.22px;font-family:'Liberation Sans', sans-serif;font-size:21px;font-weight:400;line-height:21px;color:#3b3a39;white-space:nowrap;transform:scale(0.9186,1.0000);transform-origin:0 17.78px;">Actions</div><div style="position:absolute;left:1380.53px;top:30.07px;font-family:'Liberation Sans', sans-serif;font-size:22px;font-weight:700;line-height:22px;color:#1f4e9a;white-space:nowrap;transform:scale(0.8614,1.0000);transform-origin:0 18.63px;">Sign in</div><div style="position:absolute;left:273.24px;top:88.73px;font-family:'Liberation Sans', sans-serif;font-size:25px;font-weight:700;line-height:25px;color:#3b3a39;white-space:nowrap;transform:scale(1.0082,1.0000);transform-origin:0 21.17px;">ab</div><div style="position:absolute;left:341.93px;top:88.27px;font-family:'Liberation Sans', sans-serif;font-size:20px;font-weight:700;line-height:20px;color:#3b3a39;white-space:nowrap;transform:scale(1.1233,1.0000);transform-origin:0 16.93px;">ab</div><div style="position:absolute;left:341.74px;top:103.47px;font-family:'Liberation Sans', sans-serif;font-size:20px;font-weight:700;line-height:20px;color:#3b3a39;white-space:nowrap;transform:scale(1.0722,1.0000);transform-origin:0 16.93px;">c</div><div style="position:absolute;left:527.57px;top:150.35px;font-family:'Liberation Sans', sans-serif;font-size:31px;font-weight:400;line-height:31px;color:#a0a0a0;white-space:nowrap;transform:scale(0.9481,1.0000);transform-origin:0 26.25px;">%</div><div style="position:absolute;left:568.51px;top:149.25px;font-family:'Liberation Sans', sans-serif;font-size:31px;font-weight:400;line-height:31px;color:#a0a0a0;white-space:nowrap;transform:scale(0.9425,1.0000);transform-origin:0 26.25px;">$€</div><div style="position:absolute;left:608.18px;top:153.75px;font-family:'Liberation Sans', sans-serif;font-size:29px;font-weight:400;line-height:29px;color:#323130;white-space:nowrap;transform:scale(1.0053,1.0000);transform-origin:0 24.55px;">.0</div><div style="position:absolute;left:651.95px;top:153.75px;font-family:'Liberation Sans', sans-serif;font-size:29px;font-weight:400;line-height:29px;color:#323130;white-space:nowrap;transform:scale(0.9762,1.0000);transform-origin:0 24.55px;">.0</div><div style="position:absolute;left:1790.94px;top:44.25px;font-family:'Liberation Sans', sans-serif;font-size:37.5px;font-weight:400;line-height:37.5px;color:#252423;white-space:nowrap;transform:scale(0.9200,0.9500);transform-origin:0 31.75px;">Display</div><div style="position:absolute;left:1836.39px;top:120.93px;font-family:'Liberation Sans', sans-serif;font-size:23px;font-weight:400;line-height:23px;color:#a19f9d;white-space:nowrap;transform:scale(0.9720,1.0000);transform-origin:0 19.47px;">Search</div><div style="position:absolute;left:1782.24px;top:172.98px;font-family:'Liberation Sans', sans-serif;font-size:24px;font-weight:400;line-height:24px;color:#605e5c;white-space:nowrap;transform:scale(0.9702,1.0000);transform-origin:0 20.32px;">General</div><div style="position:absolute;left:1877.16px;top:172.98px;font-family:'Liberation Sans', sans-serif;font-size:24px;font-weight:400;line-height:24px;color:#605e5c;white-space:nowrap;transform:scale(0.9573,1.0000);transform-origin:0 20.32px;">Hierarchy</div><div style="position:absolute;left:1989.83px;top:172.98px;font-family:'Liberation Sans', sans-serif;font-size:24px;font-weight:400;line-height:24px;color:#605e5c;white-space:nowrap;transform:scale(0.9761,1.0000);transform-origin:0 20.32px;">Numbers</div><div style="position:absolute;left:2097.53px;top:172.98px;font-family:'Liberation Sans', sans-serif;font-size:24px;font-weight:400;line-height:24px;color:#605e5c;white-space:nowrap;transform:scale(0.9761,1.0000);transform-origin:0 20.32px;">Misc.</div><div style="position:absolute;left:2167.81px;top:172.98px;font-family:'Liberation Sans', sans-serif;font-size:24px;font-weight:400;line-height:24px;color:#252423;white-space:nowrap;transform:scale(1.0064,1.0000);transform-origin:0 20.32px;">Scripting</div><div style="position:absolute;left:2168px;top:204px;width:93px;height:3px;background:#0f6cbd;"></div><div style="position:absolute;left:1798.00px;top:249.87px;font-family:'Liberation Sans', sans-serif;font-size:20px;font-weight:400;line-height:20px;color:#323130;white-space:nowrap;transform:scale(0.9972,1.0000);transform-origin:0 16.93px;">Note: Script will be executed every time when the</div><div style="position:absolute;left:1799.50px;top:280.07px;font-family:'Liberation Sans', sans-serif;font-size:20px;font-weight:400;line-height:20px;color:#323130;white-space:nowrap;transform:scale(0.9542,1.0000);transform-origin:0 16.93px;">visual is loaded</div><div style="position:absolute;left:1798.81px;top:312.34px;font-family:'Liberation Sans', sans-serif;font-size:20.5px;font-weight:700;line-height:20.5px;color:#323130;white-space:nowrap;transform:scale(0.9608,1.0000);transform-origin:0 17.36px;">On Load</div><div style="position:absolute;left:1827.85px;top:580.29px;font-family:'Liberation Sans', sans-serif;font-size:19.5px;font-weight:700;line-height:19.5px;color:#605e5c;white-space:nowrap;transform:scale(0.9087,1.0000);transform-origin:0 16.51px;">Example :</div><div style="position:absolute;left:1827.61px;top:610.09px;font-family:'Liberation Sans', sans-serif;font-size:19.5px;line-height:19.5px;white-space:pre;transform:scaleX(0.9497);transform-origin:0 0;"><span style="color:#605e5c;font-weight:400">Use </span><span style="color:#3b3a39;font-weight:700">Ctrl + Space</span><span style="color:#605e5c;font-weight:400"> to open</span></div><div style="position:absolute;left:1828.44px;top:639.09px;font-family:'Liberation Sans', sans-serif;font-size:19.5px;font-weight:400;line-height:19.5px;color:#605e5c;white-space:nowrap;transform:scale(0.9500,1.0000);transform-origin:0 16.51px;">suggestionSHOWBETWEENPERIOD(LASTNQTR(1))</div><div style="position:absolute;left:2142.32px;top:711.37px;font-family:'Liberation Sans', sans-serif;font-size:22px;font-weight:700;line-height:22px;color:#ffffff;white-space:nowrap;transform:scale(0.9637,1.0000);transform-origin:0 18.63px;">Run now</div><div style="position:absolute;left:1808.48px;top:367.92px;font-family:'Liberation Sans', sans-serif;font-size:21px;line-height:21px;white-space:pre;transform:scaleX(0.9752);transform-origin:0 0;"><span style="color:#2a7ac7;font-weight:400">SETVISIBILITY</span><span style="color:#323130;font-weight:400">([</span><span style="color:#2a7ac7;font-weight:400">[Furniture]</span><span style="color:#323130;font-weight:400"> , </span><span style="color:#2a7ac7;font-weight:400">COLUMNS</span><span style="color:#323130;font-weight:400">. </span><span style="color:#2a7ac7;font-weight:400">[West</span></div><div style="position:absolute;left:1808.39px;top:404.72px;font-family:'Liberation Sans', sans-serif;font-size:21px;line-height:21px;white-space:pre;transform:scaleX(0.9579);transform-origin:0 0;"><span style="color:#2a7ac7;font-weight:400">&gt; Sum of Profit]</span><span style="color:#323130;font-weight:400">]</span><span style="color:#323130;font-weight:400"> , </span><span style="color:#2a7ac7;font-weight:400">FALSE</span><span style="color:#323130;font-weight:400">)</span></div><div style="position:absolute;left:6.97px;top:1259.37px;font-family:'Liberation Sans', sans-serif;font-size:22px;font-weight:400;line-height:22px;color:#252423;white-space:nowrap;transform:scale(0.9731,1.0000);transform-origin:0 18.63px;">Total rows: 21</div><div style="position:absolute;left:1270.63px;top:1266.63px;font-family:'Liberation Mono', monospace;font-size:21.5px;font-weight:400;line-height:21.5px;color:#252423;white-space:nowrap;transform:scale(0.9135,1.0500);transform-origin:0 16.47px;">100</div><div style="position:absolute;left:1309.31px;top:1265.32px;font-family:'Liberation Sans', sans-serif;font-size:21px;font-weight:400;line-height:21px;color:#252423;white-space:nowrap;transform:scale(0.9350,1.0000);transform-origin:0 17.78px;">%</div><div style="position:absolute;left:1427.52px;top:1259.37px;font-family:'Liberation Sans', sans-serif;font-size:22px;font-weight:400;line-height:22px;color:#252423;white-space:nowrap;transform:scale(0.9593,1.0000);transform-origin:0 18.63px;">16 records</div><div style="position:absolute;left:1598.60px;top:1259.37px;font-family:'Liberation Sans', sans-serif;font-size:22px;font-weight:400;line-height:22px;color:#252423;white-space:nowrap;transform:scale(0.9683,1.0000);transform-origin:0 18.63px;">Page 1 of 1</div><div style="position:absolute;left:31.24px;top:262.37px;font-family:'Liberation Sans', sans-serif;font-size:22px;font-weight:400;line-height:22px;color:#3b3a39;white-space:nowrap;transform:scale(0.9686,1.0000);transform-origin:0 18.63px;">Sum of Quantity, Sum of Profit by Category, Sub - Category, Region</div><div style="position:absolute;left:36.92px;top:333.77px;font-family:'Liberation Sans', sans-serif;font-size:22px;font-weight:700;line-height:22px;color:#201f1e;white-space:nowrap;transform:scale(0.8938,1.0000);transform-origin:0 18.63px;">Region</div><div style="position:absolute;left:261.18px;top:334.17px;font-family:'Liberation Sans', sans-serif;font-size:22px;font-weight:700;line-height:22px;color:#201f1e;white-space:nowrap;transform:scale(0.9322,1.0000);transform-origin:0 18.63px;">Central</div><div style="position:absolute;left:551.17px;top:334.17px;font-family:'Liberation Sans', sans-serif;font-size:22px;font-weight:700;line-height:22px;color:#201f1e;white-space:nowrap;transform:scale(0.8622,1.0000);transform-origin:0 18.63px;">East</div><div style="position:absolute;left:842.30px;top:334.17px;font-family:'Liberation Sans', sans-serif;font-size:22px;font-weight:700;line-height:22px;color:#201f1e;white-space:nowrap;transform:scale(0.9058,1.0000);transform-origin:0 18.63px;">South</div><div style="position:absolute;left:1134.20px;top:334.17px;font-family:'Liberation Sans', sans-serif;font-size:22px;font-weight:700;line-height:22px;color:#201f1e;white-space:nowrap;transform:scale(0.8744,1.0000);transform-origin:0 18.63px;">West</div><div style="position:absolute;left:65.94px;top:401.80px;font-family:'Liberation Sans', sans-serif;font-size:21.5px;font-weight:400;line-height:21.5px;color:#252423;white-space:nowrap;transform:scale(0.9847,1.0000);transform-origin:0 18.20px;">Category</div><div style="position:absolute;left:323.07px;top:388.82px;font-family:'Liberation Sans', sans-serif;font-size:21px;font-weight:400;line-height:21px;color:#252423;white-space:nowrap;transform:scale(0.9798,1.0000);transform-origin:0 17.78px;">Sum of</div><div style="position:absolute;left:305.30px;top:416.82px;font-family:'Liberation Sans', sans-serif;font-size:21px;font-weight:400;line-height:21px;color:#252423;white-space:nowrap;transform:scale(1.0611,1.0000);transform-origin:0 17.78px;">Quantity</div><div style="position:absolute;left:409.83px;top:391.42px;font-family:'Liberation Sans', sans-serif;font-size:21px;font-weight:400;line-height:21px;color:#252423;white-space:nowrap;transform:scale(1.0214,1.0000);transform-origin:0 17.78px;">Sum of Profit</div><div style="position:absolute;left:431.18px;top:418.66px;font-family:'Liberation Sans', sans-serif;font-size:18px;font-weight:400;line-height:18px;color:#252423;white-space:nowrap;transform:scale(0.9563,1.0000);transform-origin:0 15.24px;">in Thousands</div><div style="position:absolute;left:614.07px;top:388.82px;font-family:'Liberation Sans', sans-serif;font-size:21px;font-weight:400;line-height:21px;color:#252423;white-space:nowrap;transform:scale(0.9798,1.0000);transform-origin:0 17.78px;">Sum of</div><div style="position:absolute;left:596.30px;top:416.82px;font-family:'Liberation Sans', sans-serif;font-size:21px;font-weight:400;line-height:21px;color:#252423;white-space:nowrap;transform:scale(1.0611,1.0000);transform-origin:0 17.78px;">Quantity</div><div style="position:absolute;left:700.83px;top:391.42px;font-family:'Liberation Sans', sans-serif;font-size:21px;font-weight:400;line-height:21px;color:#252423;white-space:nowrap;transform:scale(1.0214,1.0000);transform-origin:0 17.78px;">Sum of Profit</div><div style="position:absolute;left:722.18px;top:418.66px;font-family:'Liberation Sans', sans-serif;font-size:18px;font-weight:400;line-height:18px;color:#252423;white-space:nowrap;transform:scale(0.9563,1.0000);transform-origin:0 15.24px;">in Thousands</div><div style="position:absolute;left:905.07px;top:388.82px;font-family:'Liberation Sans', sans-serif;font-size:21px;font-weight:400;line-height:21px;color:#252423;white-space:nowrap;transform:scale(0.9798,1.0000);transform-origin:0 17.78px;">Sum of</div><div style="position:absolute;left:887.30px;top:416.82px;font-family:'Liberation Sans', sans-serif;font-size:21px;font-weight:400;line-height:21px;color:#252423;white-space:nowrap;transform:scale(1.0611,1.0000);transform-origin:0 17.78px;">Quantity</div><div style="position:absolute;left:991.83px;top:391.42px;font-family:'Liberation Sans', sans-serif;font-size:21px;font-weight:400;line-height:21px;color:#252423;white-space:nowrap;transform:scale(1.0214,1.0000);transform-origin:0 17.78px;">Sum of Profit</div><div style="position:absolute;left:1013.18px;top:418.66px;font-family:'Liberation Sans', sans-serif;font-size:18px;font-weight:400;line-height:18px;color:#252423;white-space:nowrap;transform:scale(0.9563,1.0000);transform-origin:0 15.24px;">in Thousands</div><div style="position:absolute;left:1195.07px;top:388.82px;font-family:'Liberation Sans', sans-serif;font-size:21px;font-weight:400;line-height:21px;color:#252423;white-space:nowrap;transform:scale(0.9798,1.0000);transform-origin:0 17.78px;">Sum of</div><div style="position:absolute;left:1177.30px;top:416.82px;font-family:'Liberation Sans', sans-serif;font-size:21px;font-weight:400;line-height:21px;color:#252423;white-space:nowrap;transform:scale(1.0611,1.0000);transform-origin:0 17.78px;">Quantity</div><div style="position:absolute;left:71.65px;top:474.17px;font-family:'Liberation Sans', sans-serif;font-size:22px;font-weight:700;line-height:22px;color:#201f1e;white-space:nowrap;transform:scale(1.0088,1.0000);transform-origin:0 18.63px;">All</div><div style="position:absolute;left:289.57px;top:476.33px;font-family:'Liberation Mono', monospace;font-size:21.5px;font-weight:700;line-height:21.5px;color:#201f1e;white-space:nowrap;transform:scale(0.9256,1.0760);transform-origin:0 16.47px;">8,780.00</div><div style="position:absolute;left:470.10px;top:476.33px;font-family:'Liberation Mono', monospace;font-size:21.5px;font-weight:700;line-height:21.5px;color:#201f1e;white-space:nowrap;transform:scale(0.9256,1.0760);transform-origin:0 16.47px;">39.71</div><div style="position:absolute;left:568.63px;top:476.33px;font-family:'Liberation Mono', monospace;font-size:21.5px;font-weight:700;line-height:21.5px;color:#201f1e;white-space:nowrap;transform:scale(0.9256,1.0760);transform-origin:0 16.47px;">10,618.00</div><div style="position:absolute;left:761.49px;top:476.33px;font-family:'Liberation Mono', monospace;font-size:21.5px;font-weight:700;line-height:21.5px;color:#201f1e;white-space:nowrap;transform:scale(0.9256,1.0760);transform-origin:0 16.47px;">91.52</div><div style="position:absolute;left:871.57px;top:476.33px;font-family:'Liberation Mono', monospace;font-size:21.5px;font-weight:700;line-height:21.5px;color:#201f1e;white-space:nowrap;transform:scale(0.9256,1.0760);transform-origin:0 16.47px;">6,209.00</div><div style="position:absolute;left:1052.30px;top:476.33px;font-family:'Liberation Mono', monospace;font-size:21.5px;font-weight:700;line-height:21.5px;color:#201f1e;white-space:nowrap;transform:scale(0.9256,1.0760);transform-origin:0 16.47px;">46.75</div><div style="position:absolute;left:1149.63px;top:476.33px;font-family:'Liberation Mono', monospace;font-size:21.5px;font-weight:700;line-height:21.5px;color:#201f1e;white-space:nowrap;transform:scale(0.9256,1.0760);transform-origin:0 16.47px;">12,266.00</div><div style="position:absolute;left:71.40px;top:517.47px;font-family:'Liberation Sans', sans-serif;font-size:22px;font-weight:700;line-height:22px;color:#201f1e;white-space:nowrap;transform:scale(0.9135,1.0000);transform-origin:0 18.63px;">Office Supplies</div><div style="position:absolute;left:289.57px;top:519.63px;font-family:'Liberation Mono', monospace;font-size:21.5px;font-weight:700;line-height:21.5px;color:#201f1e;white-space:nowrap;transform:scale(0.9256,1.0760);transform-origin:0 16.47px;">5,409.00</div><div style="position:absolute;left:482.33px;top:519.63px;font-family:'Liberation Mono', monospace;font-size:21.5px;font-weight:700;line-height:21.5px;color:#201f1e;white-space:nowrap;transform:scale(0.9256,1.0760);transform-origin:0 16.47px;">8.88</div><div style="position:absolute;left:580.57px;top:519.63px;font-family:'Liberation Mono', monospace;font-size:21.5px;font-weight:700;line-height:21.5px;color:#201f1e;white-space:nowrap;transform:scale(0.9256,1.0760);transform-origin:0 16.47px;">6,462.00</div><div style="position:absolute;left:761.10px;top:519.63px;font-family:'Liberation Mono', monospace;font-size:21.5px;font-weight:700;line-height:21.5px;color:#201f1e;white-space:nowrap;transform:scale(0.9256,1.0760);transform-origin:0 16.47px;">41.01</div><div style="position:absolute;left:871.57px;top:519.63px;font-family:'Liberation Mono', monospace;font-size:21.5px;font-weight:700;line-height:21.5px;color:#201f1e;white-space:nowrap;transform:scale(0.9256,1.0760);transform-origin:0 16.47px;">3,800.00</div><div style="position:absolute;left:1052.49px;top:519.63px;font-family:'Liberation Mono', monospace;font-size:21.5px;font-weight:700;line-height:21.5px;color:#201f1e;white-space:nowrap;transform:scale(0.9256,1.0760);transform-origin:0 16.47px;">19.99</div><div style="position:absolute;left:1161.57px;top:519.63px;font-family:'Liberation Mono', monospace;font-size:21.5px;font-weight:700;line-height:21.5px;color:#201f1e;white-space:nowrap;transform:scale(0.9256,1.0760);transform-origin:0 16.47px;">7,235.00</div><div style="position:absolute;left:80.11px;top:549.57px;font-family:'Liberation Sans', sans-serif;font-size:22px;font-weight:400;line-height:22px;color:#201f1e;white-space:nowrap;transform:scale(0.9591,1.0000);transform-origin:0 18.63px;">Binders</div><div style="position:absolute;left:289.67px;top:551.73px;font-family:'Liberation Mono', monospace;font-size:21.5px;font-weight:400;line-height:21.5px;color:#201f1e;white-space:nowrap;transform:scale(0.9256,1.0760);transform-origin:0 16.47px;">1,473.00</div><div style="position:absolute;left:470.30px;top:551.73px;font-family:'Liberation Mono', monospace;font-size:21.5px;font-weight:400;line-height:21.5px;color:#201f1e;white-space:nowrap;transform:scale(0.9256,1.0760);transform-origin:0 16.47px;">-1.04</div><div style="position:absolute;left:580.67px;top:551.73px;font-family:'Liberation Mono', monospace;font-size:21.5px;font-weight:400;line-height:21.5px;color:#201f1e;white-space:nowrap;transform:scale(0.9256,1.0760);transform-origin:0 16.47px;">1,652.00</div><div style="position:absolute;left:761.89px;top:551.73px;font-family:'Liberation Mono', monospace;font-size:21.5px;font-weight:400;line-height:21.5px;color:#201f1e;white-space:nowrap;transform:scale(0.9256,1.0760);transform-origin:0 16.47px;">11.27</div><div style="position:absolute;left:895.55px;top:551.73px;font-family:'Liberation Mono', monospace;font-size:21.5px;font-weight:400;line-height:21.5px;color:#201f1e;white-space:nowrap;transform:scale(0.9256,1.0760);transform-origin:0 16.47px;">981.00</div><div style="position:absolute;left:1064.43px;top:551.73px;font-family:'Liberation Mono', monospace;font-size:21.5px;font-weight:400;line-height:21.5px;color:#201f1e;white-space:nowrap;transform:scale(0.9256,1.0760);transform-origin:0 16.47px;">3.90</div><div style="position:absolute;left:1161.67px;top:551.73px;font-family:'Liberation Mono', monospace;font-size:21.5px;font-weight:400;line-height:21.5px;color:#201f1e;white-space:nowrap;transform:scale(0.9256,1.0760);transform-origin:0 16.47px;">1,868.00</div><div style="position:absolute;left:79.76px;top:582.37px;font-family:'Liberation Sans', sans-serif;font-size:22px;font-weight:400;line-height:22px;color:#201f1e;white-space:nowrap;transform:scale(0.9321,1.0000);transform-origin:0 18.63px;">Paper</div><div style="position:absolute;left:289.67px;top:584.53px;font-family:'Liberation Mono', monospace;font-size:21.5px;font-weight:400;line-height:21.5px;color:#201f1e;white-space:nowrap;transform:scale(0.9256,1.0760);transform-origin:0 16.47px;">1,225.00</div><div style="position:absolute;left:482.83px;top:584.53px;font-family:'Liberation Mono', monospace;font-size:21.5px;font-weight:400;line-height:21.5px;color:#201f1e;white-space:nowrap;transform:scale(0.9256,1.0760);transform-origin:0 16.47px;">6.97</div><div style="position:absolute;left:580.67px;top:584.53px;font-family:'Liberation Mono', monospace;font-size:21.5px;font-weight:400;line-height:21.5px;color:#201f1e;white-space:nowrap;transform:scale(0.9256,1.0760);transform-origin:0 16.47px;">1,400.00</div><div style="position:absolute;left:773.63px;top:584.53px;font-family:'Liberation Mono', monospace;font-size:21.5px;font-weight:400;line-height:21.5px;color:#201f1e;white-space:nowrap;transform:scale(0.9256,1.0760);transform-origin:0 16.47px;">9.02</div><div style="position:absolute;left:895.55px;top:584.53px;font-family:'Liberation Mono', monospace;font-size:21.5px;font-weight:400;line-height:21.5px;color:#201f1e;white-space:nowrap;transform:scale(0.9256,1.0760);transform-origin:0 16.47px;">851.00</div><div style="position:absolute;left:1064.53px;top:584.53px;font-family:'Liberation Mono', monospace;font-size:21.5px;font-weight:400;line-height:21.5px;color:#201f1e;white-space:nowrap;transform:scale(0.9256,1.0760);transform-origin:0 16.47px;">5.95</div><div style="position:absolute;left:1161.67px;top:584.53px;font-family:'Liberation Mono', monospace;font-size:21.5px;font-weight:400;line-height:21.5px;color:#201f1e;white-space:nowrap;transform:scale(0.9256,1.0760);transform-origin:0 16.47px;">1,702.00</div><div style="position:absolute;left:80.57px;top:615.17px;font-family:'Liberation Sans', sans-serif;font-size:22px;font-weight:400;line-height:22px;color:#201f1e;white-space:nowrap;transform:scale(0.9344,1.0000);transform-origin:0 18.63px;">Storage</div><div style="position:absolute;left:313.55px;top:617.33px;font-family:'Liberation Mono', monospace;font-size:21.5px;font-weight:400;line-height:21.5px;color:#201f1e;white-space:nowrap;transform:scale(0.9256,1.0760);transform-origin:0 16.47px;">724.00</div><div style="position:absolute;left:482.83px;top:617.33px;font-family:'Liberation Mono', monospace;font-size:21.5px;font-weight:400;line-height:21.5px;color:#201f1e;white-space:nowrap;transform:scale(0.9256,1.0760);transform-origin:0 16.47px;">1.97</div><div style="position:absolute;left:604.55px;top:617.33px;font-family:'Liberation Mono', monospace;font-size:21.5px;font-weight:400;line-height:21.5px;color:#201f1e;white-space:nowrap;transform:scale(0.9256,1.0760);transform-origin:0 16.47px;">907.00</div><div style="position:absolute;left:773.63px;top:617.33px;font-family:'Liberation Mono', monospace;font-size:21.5px;font-weight:400;line-height:21.5px;color:#201f1e;white-space:nowrap;transform:scale(0.9256,1.0760);transform-origin:0 16.47px;">8.39</div><div style="position:absolute;left:895.55px;top:617.33px;font-family:'Liberation Mono', monospace;font-size:21.5px;font-weight:400;line-height:21.5px;color:#201f1e;white-space:nowrap;transform:scale(0.9256,1.0760);transform-origin:0 16.47px;">488.00</div><div style="position:absolute;left:1064.83px;top:617.33px;font-family:'Liberation Mono', monospace;font-size:21.5px;font-weight:400;line-height:21.5px;color:#201f1e;white-space:nowrap;transform:scale(0.9256,1.0760);transform-origin:0 16.47px;">2.27</div><div style="position:absolute;left:1161.67px;top:617.33px;font-family:'Liberation Mono', monospace;font-size:21.5px;font-weight:400;line-height:21.5px;color:#201f1e;white-space:nowrap;transform:scale(0.9256,1.0760);transform-origin:0 16.47px;">1,039.00</div><div style="position:absolute;left:81.50px;top:647.97px;font-family:'Liberation Sans', sans-serif;font-size:22px;font-weight:400;line-height:22px;color:#201f1e;white-space:nowrap;transform:scale(1.0057,1.0000);transform-origin:0 18.63px;">Art</div><div style="position:absolute;left:313.55px;top:650.13px;font-family:'Liberation Mono', monospace;font-size:21.5px;font-weight:400;line-height:21.5px;color:#201f1e;white-space:nowrap;transform:scale(0.9256,1.0760);transform-origin:0 16.47px;">678.00</div><div style="position:absolute;left:482.43px;top:650.13px;font-family:'Liberation Mono', monospace;font-size:21.5px;font-weight:400;line-height:21.5px;color:#201f1e;white-space:nowrap;transform:scale(0.9256,1.0760);transform-origin:0 16.47px;">1.20</div><div style="position:absolute;left:604.55px;top:650.13px;font-family:'Liberation Mono', monospace;font-size:21.5px;font-weight:400;line-height:21.5px;color:#201f1e;white-space:nowrap;transform:scale(0.9256,1.0760);transform-origin:0 16.47px;">849.00</div><div style="position:absolute;left:773.43px;top:650.13px;font-family:'Liberation Mono', monospace;font-size:21.5px;font-weight:400;line-height:21.5px;color:#201f1e;white-space:nowrap;transform:scale(0.9256,1.0760);transform-origin:0 16.47px;">1.90</div><div style="position:absolute;left:895.55px;top:650.13px;font-family:'Liberation Mono', monospace;font-size:21.5px;font-weight:400;line-height:21.5px;color:#201f1e;white-space:nowrap;transform:scale(0.9256,1.0760);transform-origin:0 16.47px;">547.00</div><div style="position:absolute;left:1064.53px;top:650.13px;font-family:'Liberation Mono', monospace;font-size:21.5px;font-weight:400;line-height:21.5px;color:#201f1e;white-space:nowrap;transform:scale(0.9256,1.0760);transform-origin:0 16.47px;">1.06</div><div style="position:absolute;left:1185.55px;top:650.13px;font-family:'Liberation Mono', monospace;font-size:21.5px;font-weight:400;line-height:21.5px;color:#201f1e;white-space:nowrap;transform:scale(0.9256,1.0760);transform-origin:0 16.47px;">926.00</div><div style="position:absolute;left:81.50px;top:680.37px;font-family:'Liberation Sans', sans-serif;font-size:22px;font-weight:400;line-height:22px;color:#201f1e;white-space:nowrap;transform:scale(0.9578,1.0000);transform-origin:0 18.63px;">Appliances</div><div style="position:absolute;left:313.55px;top:682.53px;font-family:'Liberation Mono', monospace;font-size:21.5px;font-weight:400;line-height:21.5px;color:#201f1e;white-space:nowrap;transform:scale(0.9256,1.0760);transform-origin:0 16.47px;">470.00</div><div style="position:absolute;left:470.30px;top:682.53px;font-family:'Liberation Mono', monospace;font-size:21.5px;font-weight:400;line-height:21.5px;color:#201f1e;white-space:nowrap;transform:scale(0.9256,1.0760);transform-origin:0 16.47px;">-2.64</div><div style="position:absolute;left:604.55px;top:682.53px;font-family:'Liberation Mono', monospace;font-size:21.5px;font-weight:400;line-height:21.5px;color:#201f1e;white-space:nowrap;transform:scale(0.9256,1.0760);transform-origin:0 16.47px;">474.00</div><div style="position:absolute;left:773.63px;top:682.53px;font-family:'Liberation Mono', monospace;font-size:21.5px;font-weight:400;line-height:21.5px;color:#201f1e;white-space:nowrap;transform:scale(0.9256,1.0760);transform-origin:0 16.47px;">8.39</div><div style="position:absolute;left:895.55px;top:682.53px;font-family:'Liberation Mono', monospace;font-size:21.5px;font-weight:400;line-height:21.5px;color:#201f1e;white-space:nowrap;transform:scale(0.9256,1.0760);transform-origin:0 16.47px;">293.00</div><div style="position:absolute;left:1064.63px;top:682.53px;font-family:'Liberation Mono', monospace;font-size:21.5px;font-weight:400;line-height:21.5px;color:#201f1e;white-space:nowrap;transform:scale(0.9256,1.0760);transform-origin:0 16.47px;">4.12</div><div style="position:absolute;left:1185.55px;top:682.53px;font-family:'Liberation Mono', monospace;font-size:21.5px;font-weight:400;line-height:21.5px;color:#201f1e;white-space:nowrap;transform:scale(0.9256,1.0760);transform-origin:0 16.47px;">492.00</div><div style="position:absolute;left:79.83px;top:713.17px;font-family:'Liberation Sans', sans-serif;font-size:22px;font-weight:400;line-height:22px;color:#201f1e;white-space:nowrap;transform:scale(0.9476,1.0000);transform-origin:0 18.63px;">Labels</div><div style="position:absolute;left:313.55px;top:715.33px;font-family:'Liberation Mono', monospace;font-size:21.5px;font-weight:400;line-height:21.5px;color:#201f1e;white-space:nowrap;transform:scale(0.9256,1.0760);transform-origin:0 16.47px;">284.00</div><div style="position:absolute;left:482.83px;top:715.33px;font-family:'Liberation Mono', monospace;font-size:21.5px;font-weight:400;line-height:21.5px;color:#201f1e;white-space:nowrap;transform:scale(0.9256,1.0760);transform-origin:0 16.47px;">1.07</div><div style="position:absolute;left:604.55px;top:715.33px;font-family:'Liberation Mono', monospace;font-size:21.5px;font-weight:400;line-height:21.5px;color:#201f1e;white-space:nowrap;transform:scale(0.9256,1.0760);transform-origin:0 16.47px;">420.00</div><div style="position:absolute;left:773.53px;top:715.33px;font-family:'Liberation Mono', monospace;font-size:21.5px;font-weight:400;line-height:21.5px;color:#201f1e;white-space:nowrap;transform:scale(0.9256,1.0760);transform-origin:0 16.47px;">1.13</div><div style="position:absolute;left:895.55px;top:715.33px;font-family:'Liberation Mono', monospace;font-size:21.5px;font-weight:400;line-height:21.5px;color:#201f1e;white-space:nowrap;transform:scale(0.9256,1.0760);transform-origin:0 16.47px;">216.00</div><div style="position:absolute;left:1064.23px;top:715.33px;font-family:'Liberation Mono', monospace;font-size:21.5px;font-weight:400;line-height:21.5px;color:#201f1e;white-space:nowrap;transform:scale(0.9256,1.0760);transform-origin:0 16.47px;">1.04</div><div style="position:absolute;left:1185.55px;top:715.33px;font-family:'Liberation Mono', monospace;font-size:21.5px;font-weight:400;line-height:21.5px;color:#201f1e;white-space:nowrap;transform:scale(0.9256,1.0760);transform-origin:0 16.47px;">480.00</div><div style="position:absolute;left:79.88px;top:746.17px;font-family:'Liberation Sans', sans-serif;font-size:22px;font-weight:400;line-height:22px;color:#201f1e;white-space:nowrap;transform:scale(0.9227,1.0000);transform-origin:0 18.63px;">Fasteners</div><div style="position:absolute;left:313.55px;top:748.33px;font-family:'Liberation Mono', monospace;font-size:21.5px;font-weight:400;line-height:21.5px;color:#201f1e;white-space:nowrap;transform:scale(0.9256,1.0760);transform-origin:0 16.47px;">227.00</div><div style="position:absolute;left:482.24px;top:748.33px;font-family:'Liberation Mono', monospace;font-size:21.5px;font-weight:400;line-height:21.5px;color:#201f1e;white-space:nowrap;transform:scale(0.9256,1.0760);transform-origin:0 16.47px;">0.24</div><div style="position:absolute;left:604.55px;top:748.33px;font-family:'Liberation Mono', monospace;font-size:21.5px;font-weight:400;line-height:21.5px;color:#201f1e;white-space:nowrap;transform:scale(0.9256,1.0760);transform-origin:0 16.47px;">298.00</div><div style="position:absolute;left:773.53px;top:748.33px;font-family:'Liberation Mono', monospace;font-size:21.5px;font-weight:400;line-height:21.5px;color:#201f1e;white-space:nowrap;transform:scale(0.9256,1.0760);transform-origin:0 16.47px;">0.26</div><div style="position:absolute;left:895.55px;top:748.33px;font-family:'Liberation Mono', monospace;font-size:21.5px;font-weight:400;line-height:21.5px;color:#201f1e;white-space:nowrap;transform:scale(0.9256,1.0760);transform-origin:0 16.47px;">126.00</div><div style="position:absolute;left:1064.83px;top:748.33px;font-family:'Liberation Mono', monospace;font-size:21.5px;font-weight:400;line-height:21.5px;color:#201f1e;white-space:nowrap;transform:scale(0.9256,1.0760);transform-origin:0 16.47px;">0.17</div><div style="position:absolute;left:1185.55px;top:748.33px;font-family:'Liberation Mono', monospace;font-size:21.5px;font-weight:400;line-height:21.5px;color:#201f1e;white-space:nowrap;transform:scale(0.9256,1.0760);transform-origin:0 16.47px;">263.00</div><div style="position:absolute;left:79.83px;top:778.97px;font-family:'Liberation Sans', sans-serif;font-size:22px;font-weight:400;line-height:22px;color:#201f1e;white-space:nowrap;transform:scale(0.9500,1.0000);transform-origin:0 18.63px;">Envelopes</div><div style="position:absolute;left:313.55px;top:781.13px;font-family:'Liberation Mono', monospace;font-size:21.5px;font-weight:400;line-height:21.5px;color:#201f1e;white-space:nowrap;transform:scale(0.9256,1.0760);transform-origin:0 16.47px;">206.00</div><div style="position:absolute;left:482.53px;top:781.13px;font-family:'Liberation Mono', monospace;font-size:21.5px;font-weight:400;line-height:21.5px;color:#201f1e;white-space:nowrap;transform:scale(0.9256,1.0760);transform-origin:0 16.47px;">1.78</div><div style="position:absolute;left:604.55px;top:781.13px;font-family:'Liberation Mono', monospace;font-size:21.5px;font-weight:400;line-height:21.5px;color:#201f1e;white-space:nowrap;transform:scale(0.9256,1.0760);transform-origin:0 16.47px;">267.00</div><div style="position:absolute;left:773.24px;top:781.13px;font-family:'Liberation Mono', monospace;font-size:21.5px;font-weight:400;line-height:21.5px;color:#201f1e;white-space:nowrap;transform:scale(0.9256,1.0760);transform-origin:0 16.47px;">1.81</div><div style="position:absolute;left:895.55px;top:781.13px;font-family:'Liberation Mono', monospace;font-size:21.5px;font-weight:400;line-height:21.5px;color:#201f1e;white-space:nowrap;transform:scale(0.9256,1.0760);transform-origin:0 16.47px;">206.00</div><div style="position:absolute;left:1064.83px;top:781.13px;font-family:'Liberation Mono', monospace;font-size:21.5px;font-weight:400;line-height:21.5px;color:#201f1e;white-space:nowrap;transform:scale(0.9256,1.0760);transform-origin:0 16.47px;">1.47</div><div style="position:absolute;left:1185.55px;top:781.13px;font-family:'Liberation Mono', monospace;font-size:21.5px;font-weight:400;line-height:21.5px;color:#201f1e;white-space:nowrap;transform:scale(0.9256,1.0760);transform-origin:0 16.47px;">227.00</div><div style="position:absolute;left:80.56px;top:811.37px;font-family:'Liberation Sans', sans-serif;font-size:22px;font-weight:400;line-height:22px;color:#201f1e;white-space:nowrap;transform:scale(0.9454,1.0000);transform-origin:0 18.63px;">Supplies</div><div style="position:absolute;left:313.55px;top:813.53px;font-family:'Liberation Mono', monospace;font-size:21.5px;font-weight:400;line-height:21.5px;color:#201f1e;white-space:nowrap;transform:scale(0.9256,1.0760);transform-origin:0 16.47px;">122.00</div><div style="position:absolute;left:470.59px;top:813.53px;font-family:'Liberation Mono', monospace;font-size:21.5px;font-weight:400;line-height:21.5px;color:#201f1e;white-space:nowrap;transform:scale(0.9256,1.0760);transform-origin:0 16.47px;">-0.66</div><div style="position:absolute;left:604.55px;top:813.53px;font-family:'Liberation Mono', monospace;font-size:21.5px;font-weight:400;line-height:21.5px;color:#201f1e;white-space:nowrap;transform:scale(0.9256,1.0760);transform-origin:0 16.47px;">195.00</div><div style="position:absolute;left:761.59px;top:813.53px;font-family:'Liberation Mono', monospace;font-size:21.5px;font-weight:400;line-height:21.5px;color:#201f1e;white-space:nowrap;transform:scale(0.9256,1.0760);transform-origin:0 16.47px;">-1.16</div><div style="position:absolute;left:907.49px;top:813.53px;font-family:'Liberation Mono', monospace;font-size:21.5px;font-weight:400;line-height:21.5px;color:#201f1e;white-space:nowrap;transform:scale(0.9256,1.0760);transform-origin:0 16.47px;">92.00</div><div style="position:absolute;left:1064.43px;top:813.53px;font-family:'Liberation Mono', monospace;font-size:21.5px;font-weight:400;line-height:21.5px;color:#201f1e;white-space:nowrap;transform:scale(0.9256,1.0760);transform-origin:0 16.47px;">0.00</div><div style="position:absolute;left:1185.55px;top:813.53px;font-family:'Liberation Mono', monospace;font-size:21.5px;font-weight:400;line-height:21.5px;color:#201f1e;white-space:nowrap;transform:scale(0.9256,1.0760);transform-origin:0 16.47px;">238.00</div><div style="position:absolute;left:73.31px;top:845.57px;font-family:'Liberation Sans', sans-serif;font-size:22px;font-weight:700;line-height:22px;color:#201f1e;white-space:nowrap;transform:scale(0.8745,1.0000);transform-origin:0 18.63px;">Technology</div><div style="position:absolute;left:289.57px;top:847.73px;font-family:'Liberation Mono', monospace;font-size:21.5px;font-weight:700;line-height:21.5px;color:#201f1e;white-space:nowrap;transform:scale(0.9256,1.0760);transform-origin:0 16.47px;">1,544.00</div><div style="position:absolute;left:470.39px;top:847.73px;font-family:'Liberation Mono', monospace;font-size:21.5px;font-weight:700;line-height:21.5px;color:#201f1e;white-space:nowrap;transform:scale(0.9256,1.0760);transform-origin:0 16.47px;">33.70</div><div style="position:absolute;left:580.57px;top:847.73px;font-family:'Liberation Mono', monospace;font-size:21.5px;font-weight:700;line-height:21.5px;color:#201f1e;white-space:nowrap;transform:scale(0.9256,1.0760);transform-origin:0 16.47px;">1,942.00</div><div style="position:absolute;left:761.39px;top:847.73px;font-family:'Liberation Mono', monospace;font-size:21.5px;font-weight:700;line-height:21.5px;color:#201f1e;white-space:nowrap;transform:scale(0.9256,1.0760);transform-origin:0 16.47px;">47.46</div><div style="position:absolute;left:871.57px;top:847.73px;font-family:'Liberation Mono', monospace;font-size:21.5px;font-weight:700;line-height:21.5px;color:#201f1e;white-space:nowrap;transform:scale(0.9256,1.0760);transform-origin:0 16.47px;">1,118.00</div><div style="position:absolute;left:1052.49px;top:847.73px;font-family:'Liberation Mono', monospace;font-size:21.5px;font-weight:700;line-height:21.5px;color:#201f1e;white-space:nowrap;transform:scale(0.9256,1.0760);transform-origin:0 16.47px;">19.99</div><div style="position:absolute;left:1161.57px;top:847.73px;font-family:'Liberation Mono', monospace;font-size:21.5px;font-weight:700;line-height:21.5px;color:#201f1e;white-space:nowrap;transform:scale(0.9256,1.0760);transform-origin:0 16.47px;">2,335.00</div><div style="position:absolute;left:79.85px;top:878.37px;font-family:'Liberation Sans', sans-serif;font-size:22px;font-weight:400;line-height:22px;color:#201f1e;white-space:nowrap;transform:scale(0.9368,1.0000);transform-origin:0 18.63px;">Phones</div><div style="position:absolute;left:313.55px;top:880.53px;font-family:'Liberation Mono', monospace;font-size:21.5px;font-weight:400;line-height:21.5px;color:#201f1e;white-space:nowrap;transform:scale(0.9256,1.0760);transform-origin:0 16.47px;">713.00</div><div style="position:absolute;left:470.69px;top:880.53px;font-family:'Liberation Mono', monospace;font-size:21.5px;font-weight:400;line-height:21.5px;color:#201f1e;white-space:nowrap;transform:scale(0.9256,1.0760);transform-origin:0 16.47px;">12.32</div><div style="position:absolute;left:604.55px;top:880.53px;font-family:'Liberation Mono', monospace;font-size:21.5px;font-weight:400;line-height:21.5px;color:#201f1e;white-space:nowrap;transform:scale(0.9256,1.0760);transform-origin:0 16.47px;">982.00</div><div style="position:absolute;left:761.29px;top:880.53px;font-family:'Liberation Mono', monospace;font-size:21.5px;font-weight:400;line-height:21.5px;color:#201f1e;white-space:nowrap;transform:scale(0.9256,1.0760);transform-origin:0 16.47px;">12.31</div><div style="position:absolute;left:895.55px;top:880.53px;font-family:'Liberation Mono', monospace;font-size:21.5px;font-weight:400;line-height:21.5px;color:#201f1e;white-space:nowrap;transform:scale(0.9256,1.0760);transform-origin:0 16.47px;">526.00</div><div style="position:absolute;left:1052.89px;top:880.53px;font-family:'Liberation Mono', monospace;font-size:21.5px;font-weight:400;line-height:21.5px;color:#201f1e;white-space:nowrap;transform:scale(0.9256,1.0760);transform-origin:0 16.47px;">10.77</div><div style="position:absolute;left:1161.67px;top:880.53px;font-family:'Liberation Mono', monospace;font-size:21.5px;font-weight:400;line-height:21.5px;color:#201f1e;white-space:nowrap;transform:scale(0.9256,1.0760);transform-origin:0 16.47px;">1,068.00</div><div style="position:absolute;left:81.50px;top:911.27px;font-family:'Liberation Sans', sans-serif;font-size:22px;font-weight:400;line-height:22px;color:#201f1e;white-space:nowrap;transform:scale(0.9082,1.0000);transform-origin:0 18.63px;">Accessories</div><div style="position:absolute;left:313.55px;top:913.43px;font-family:'Liberation Mono', monospace;font-size:21.5px;font-weight:400;line-height:21.5px;color:#201f1e;white-space:nowrap;transform:scale(0.9256,1.0760);transform-origin:0 16.47px;">716.00</div><div style="position:absolute;left:482.53px;top:913.43px;font-family:'Liberation Mono', monospace;font-size:21.5px;font-weight:400;line-height:21.5px;color:#201f1e;white-space:nowrap;transform:scale(0.9256,1.0760);transform-origin:0 16.47px;">7.25</div><div style="position:absolute;left:604.55px;top:913.43px;font-family:'Liberation Mono', monospace;font-size:21.5px;font-weight:400;line-height:21.5px;color:#201f1e;white-space:nowrap;transform:scale(0.9256,1.0760);transform-origin:0 16.47px;">724.00</div><div style="position:absolute;left:761.49px;top:913.43px;font-family:'Liberation Mono', monospace;font-size:21.5px;font-weight:400;line-height:21.5px;color:#201f1e;white-space:nowrap;transform:scale(0.9256,1.0760);transform-origin:0 16.47px;">11.20</div><div style="position:absolute;left:895.55px;top:913.43px;font-family:'Liberation Mono', monospace;font-size:21.5px;font-weight:400;line-height:21.5px;color:#201f1e;white-space:nowrap;transform:scale(0.9256,1.0760);transform-origin:0 16.47px;">504.00</div><div style="position:absolute;left:1064.43px;top:913.43px;font-family:'Liberation Mono', monospace;font-size:21.5px;font-weight:400;line-height:21.5px;color:#201f1e;white-space:nowrap;transform:scale(0.9256,1.0760);transform-origin:0 16.47px;">7.00</div><div style="position:absolute;left:1161.67px;top:913.43px;font-family:'Liberation Mono', monospace;font-size:21.5px;font-weight:400;line-height:21.5px;color:#201f1e;white-space:nowrap;transform:scale(0.9256,1.0760);transform-origin:0 16.47px;">1,032.00</div><div style="position:absolute;left:79.80px;top:943.87px;font-family:'Liberation Sans', sans-serif;font-size:22px;font-weight:400;line-height:22px;color:#201f1e;white-space:nowrap;transform:scale(0.9680,1.0000);transform-origin:0 18.63px;">Machines</div><div style="position:absolute;left:325.49px;top:946.03px;font-family:'Liberation Mono', monospace;font-size:21.5px;font-weight:400;line-height:21.5px;color:#201f1e;white-space:nowrap;transform:scale(0.9256,1.0760);transform-origin:0 16.47px;">66.00</div><div style="position:absolute;left:470.69px;top:946.03px;font-family:'Liberation Mono', monospace;font-size:21.5px;font-weight:400;line-height:21.5px;color:#201f1e;white-space:nowrap;transform:scale(0.9256,1.0760);transform-origin:0 16.47px;">-1.49</div><div style="position:absolute;left:604.55px;top:946.03px;font-family:'Liberation Mono', monospace;font-size:21.5px;font-weight:400;line-height:21.5px;color:#201f1e;white-space:nowrap;transform:scale(0.9256,1.0760);transform-origin:0 16.47px;">165.00</div><div style="position:absolute;left:773.53px;top:946.03px;font-family:'Liberation Mono', monospace;font-size:21.5px;font-weight:400;line-height:21.5px;color:#201f1e;white-space:nowrap;transform:scale(0.9256,1.0760);transform-origin:0 16.47px;">6.93</div><div style="position:absolute;left:907.49px;top:946.03px;font-family:'Liberation Mono', monospace;font-size:21.5px;font-weight:400;line-height:21.5px;color:#201f1e;white-space:nowrap;transform:scale(0.9256,1.0760);transform-origin:0 16.47px;">62.00</div><div style="position:absolute;left:1052.30px;top:946.03px;font-family:'Liberation Mono', monospace;font-size:21.5px;font-weight:400;line-height:21.5px;color:#201f1e;white-space:nowrap;transform:scale(0.9256,1.0760);transform-origin:0 16.47px;">-1.44</div><div style="position:absolute;left:1185.55px;top:946.03px;font-family:'Liberation Mono', monospace;font-size:21.5px;font-weight:400;line-height:21.5px;color:#201f1e;white-space:nowrap;transform:scale(0.9256,1.0760);transform-origin:0 16.47px;">147.00</div><div style="position:absolute;left:80.45px;top:976.17px;font-family:'Liberation Sans', sans-serif;font-size:22px;font-weight:400;line-height:22px;color:#201f1e;white-space:nowrap;transform:scale(0.9537,1.0000);transform-origin:0 18.63px;">Copiers</div><div style="position:absolute;left:325.49px;top:978.33px;font-family:'Liberation Mono', monospace;font-size:21.5px;font-weight:400;line-height:21.5px;color:#201f1e;white-space:nowrap;transform:scale(0.9256,1.0760);transform-origin:0 16.47px;">49.00</div><div style="position:absolute;left:470.30px;top:978.33px;font-family:'Liberation Mono', monospace;font-size:21.5px;font-weight:400;line-height:21.5px;color:#201f1e;white-space:nowrap;transform:scale(0.9256,1.0760);transform-origin:0 16.47px;">15.61</div><div style="position:absolute;left:616.49px;top:978.33px;font-family:'Liberation Mono', monospace;font-size:21.5px;font-weight:400;line-height:21.5px;color:#201f1e;white-space:nowrap;transform:scale(0.9256,1.0760);transform-origin:0 16.47px;">71.00</div><div style="position:absolute;left:761.69px;top:978.33px;font-family:'Liberation Mono', monospace;font-size:21.5px;font-weight:400;line-height:21.5px;color:#201f1e;white-space:nowrap;transform:scale(0.9256,1.0760);transform-origin:0 16.47px;">17.02</div><div style="position:absolute;left:907.49px;top:978.33px;font-family:'Liberation Mono', monospace;font-size:21.5px;font-weight:400;line-height:21.5px;color:#201f1e;white-space:nowrap;transform:scale(0.9256,1.0760);transform-origin:0 16.47px;">26.00</div><div style="position:absolute;left:1064.53px;top:978.33px;font-family:'Liberation Mono', monospace;font-size:21.5px;font-weight:400;line-height:21.5px;color:#201f1e;white-space:nowrap;transform:scale(0.9256,1.0760);transform-origin:0 16.47px;">3.66</div><div style="position:absolute;left:1197.49px;top:978.33px;font-family:'Liberation Mono', monospace;font-size:21.5px;font-weight:400;line-height:21.5px;color:#201f1e;white-space:nowrap;transform:scale(0.9256,1.0760);transform-origin:0 16.47px;">88.00</div></body></html>
